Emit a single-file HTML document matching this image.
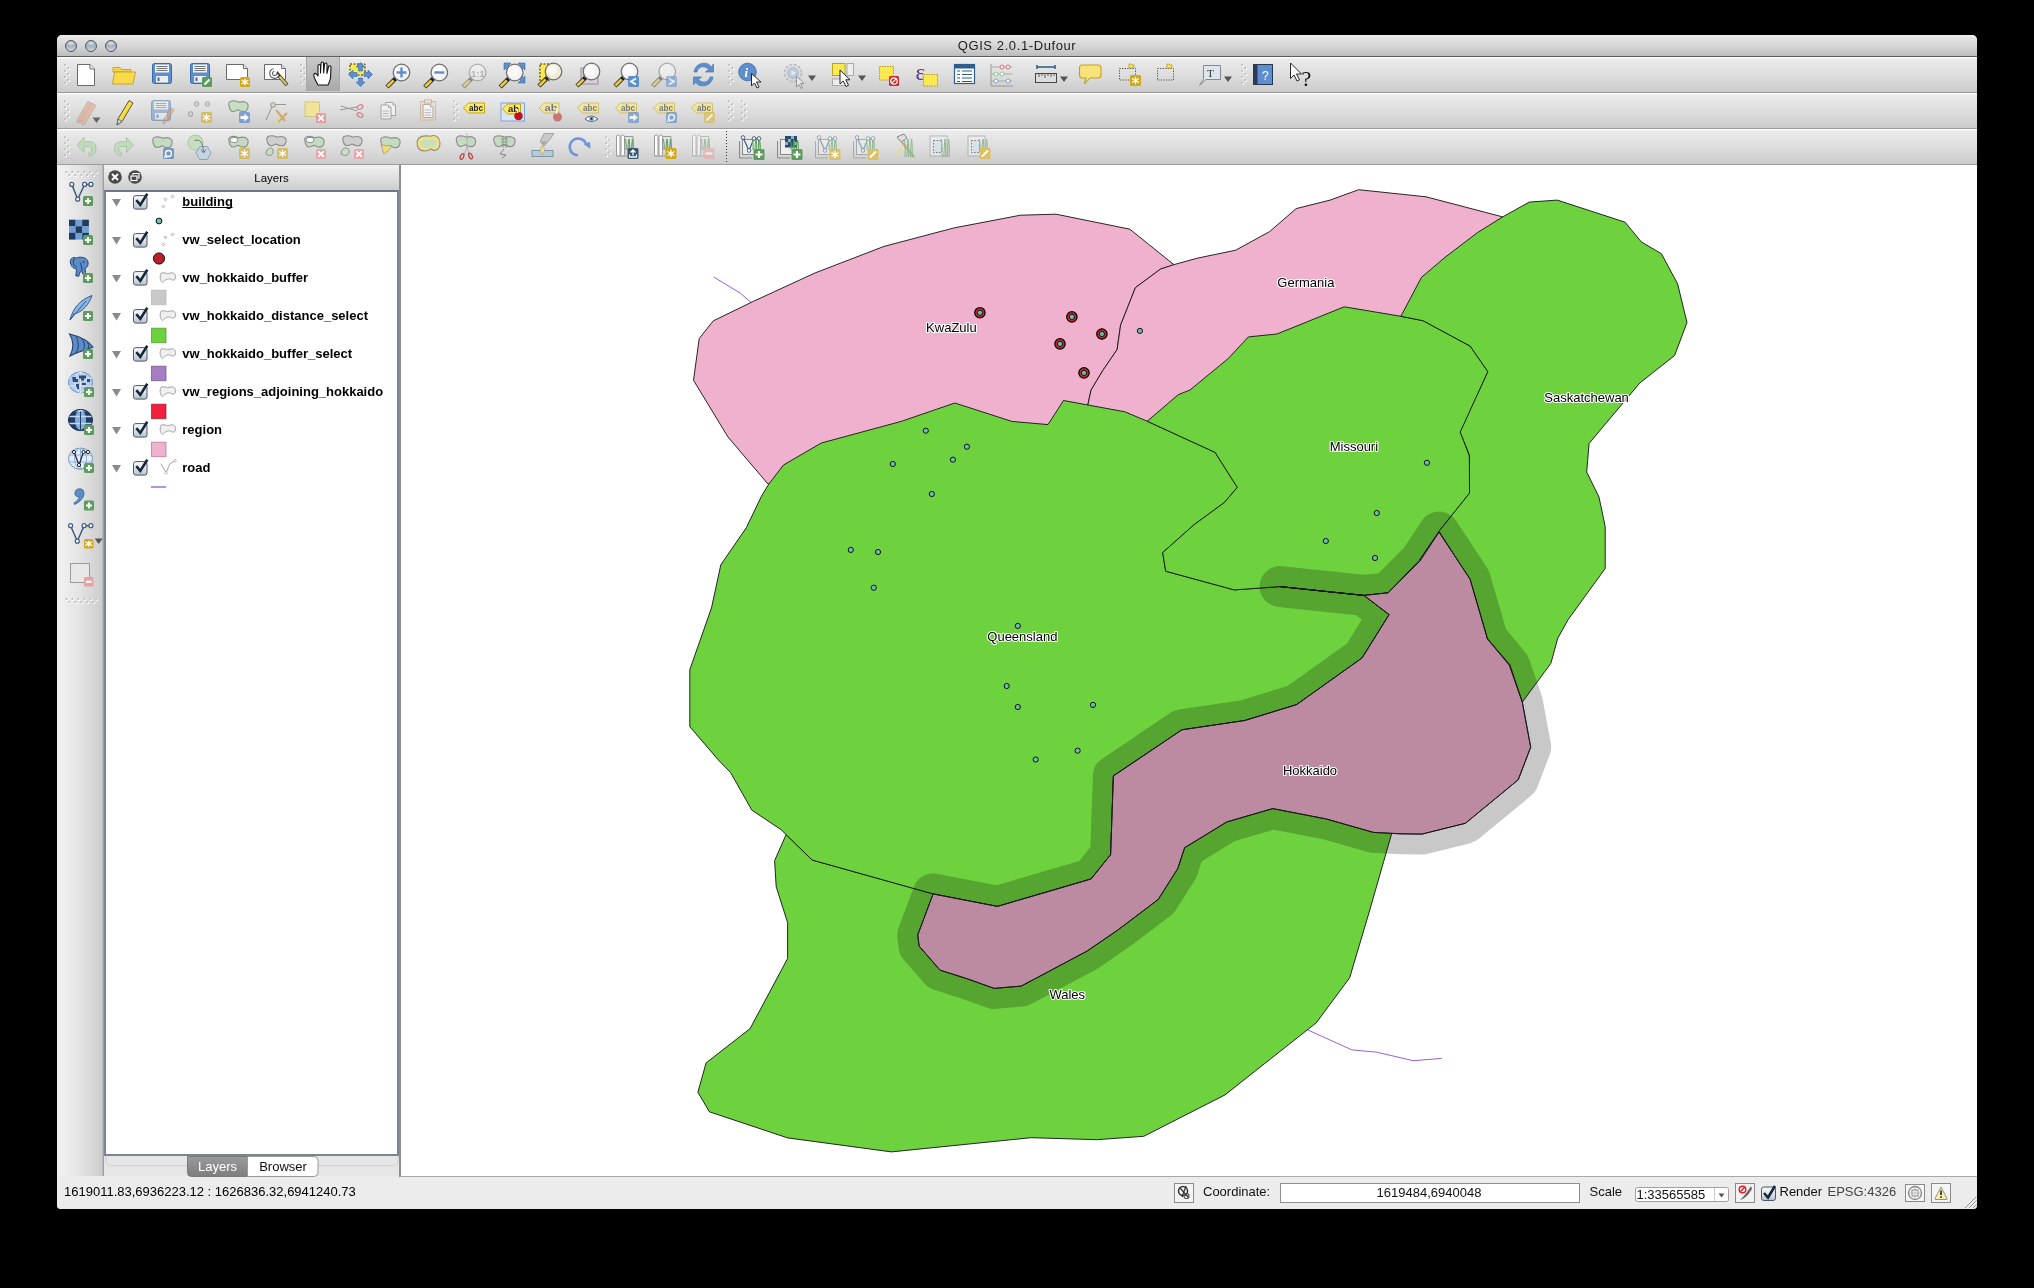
<!DOCTYPE html>
<html><head><meta charset="utf-8">
<style>
*{box-sizing:border-box;margin:0;padding:0}
html,body{width:2034px;height:1288px;background:#000;overflow:hidden;font-family:"Liberation Sans",sans-serif;color:#000}
.abs{position:absolute}
#win{position:absolute;left:57px;top:35px;width:1920px;height:1174px;background:#ececec;border-radius:5px 5px 4px 4px;overflow:hidden}
#title{position:absolute;left:0;top:0;width:1920px;height:22px;background:linear-gradient(#f2f2f2 0px,#e6e6e6 2px,#cfcfcf 14px,#bcbcbc 21px);border-bottom:1px solid #5e5e5e}
#title .t{position:absolute;left:0;width:1920px;top:3px;text-align:center;font-size:13px;letter-spacing:0.6px;color:#1d1d1d}
.light{position:absolute;top:5px;width:12px;height:12px;border-radius:50%;background:radial-gradient(ellipse 55% 30% at 50% 20%,rgba(255,255,255,.75) 0%,rgba(255,255,255,0) 100%),linear-gradient(#8796a3 0%,#a3b1bd 45%,#cbd5dd 100%);border:1px solid #505b66}
.tb{position:absolute;left:0;width:1920px;background:linear-gradient(#fbfbfb 0px,#fbfbfb 1px,#ebebeb 2px,#dcdcdc 20px,#cbcbcb 35px);border-bottom:1px solid #9c9c9c}
.grip{position:absolute;width:6px;height:24px;background-image:radial-gradient(circle,#b8b8b8 0.9px,transparent 1.2px);background-size:4px 4px}
.ico{position:absolute;width:24px;height:24px}
#lefttb{position:absolute;left:0;top:130px;width:47px;height:1011px;background:linear-gradient(90deg,#f2f2f2 0px,#e4e4e4 22px,#d0d0d0 42px,#cdcdcd 44.5px,#a9aeb4 46px,#8d949b 47px)}
#panel{position:absolute;left:47px;top:130px;width:295px;height:1011px;background:#e6e6e6}
#phead{position:absolute;left:0;top:0;width:295px;height:25px;background:linear-gradient(#f2f2f2,#cdcdcd)}
#plist{position:absolute;left:0;top:25px;width:295px;height:966px;background:#fff;border:2px solid #7a8590;border-top:2px solid #6d7882}
.row{position:absolute;left:0;height:20px;font-size:13px;font-weight:bold;white-space:nowrap}
#canvas{position:absolute;left:342px;top:130px;width:1578px;height:1012px;background:#fff;border-left:2px solid #8e8e8e;border-bottom:1px solid #a9a9a9;overflow:hidden}
#status{position:absolute;left:0;top:1142px;width:1920px;height:32px;background:#ececec;font-size:13px}
</style></head>
<body>
<div id="win">
  <div id="title">
    <div class="light" style="left:8px"></div>
    <div class="light" style="left:28px"></div>
    <div class="light" style="left:48px"></div>
    <div class="t">QGIS 2.0.1-Dufour</div>
  </div>
  <div class="tb" style="top:22px;height:36px"></div>
  <div class="tb" style="top:58px;height:36px"></div>
  <div class="tb" style="top:94px;height:36px"></div>
  <div id="lefttb"></div>
  <div id="panel">
    <div id="phead"></div>
    <div id="plist"></div>
  </div>
  <div id="canvas">
  </div>
  <div id="status">
    <div class="abs" style="left:7px;top:7px">1619011.83,6936223.12 : 1626836.32,6941240.73</div>
  </div>
</div>
<svg class="abs" style="left:400px;top:165px" width="1577" height="1011" viewBox="400 165 1577 1011">
<path d="M713.9,277.1 L740.2,293.1 L760.0,310.0" fill="none" stroke="#9b5de5" stroke-width="1"/>
<path d="M1300.0,1025.0 L1307.7,1029.9 L1351.9,1049.9 L1376.2,1052.1 L1413.2,1060.7 L1441.7,1058.4" fill="none" stroke="#9b5de5" stroke-width="1"/>
<path d="M693.5,380.3 L699.2,338.6 L713.2,320.9 L753.7,301.2 L815.2,272.9 L884.0,246.4 L954.1,227.9 L1020.5,215.2 L1056.1,214.2 L1129.9,229.2 L1174.1,264.8 L1160.5,269.1 L1135.4,287.7 L1120.6,325.1 L1117.1,349.6 L1102.8,370.5 L1091.0,390.2 L1088.0,404.2 L1070.0,430.0 L960.0,430.0 L790.0,480.0 L768.0,484.0 L727.9,436.9 Z" fill="#f0b1cf" stroke="#1a1a1a" stroke-width="0.95" stroke-linejoin="round"/>
<path d="M1173.7,264.7 L1197.3,258.2 L1235.7,250.2 L1269.6,231.6 L1296.2,208.6 L1330.1,200.1 L1358.7,189.7 L1426.0,196.8 L1502.7,216.9 L1480.0,300.0 L1400.9,316.3 L1300.0,400.0 L1147.0,430.0 L1088.0,410.0 L1088.0,404.2 L1091.0,390.2 L1102.8,370.5 L1117.1,349.6 L1120.6,325.1 L1135.4,287.7 L1160.5,269.1 Z" fill="#f0b1cf" stroke="#1a1a1a" stroke-width="0.95" stroke-linejoin="round"/>
<path d="M786.1,834.6 L774.6,860.7 L776.2,886.8 L787.6,922.6 L787.6,958.5 L750.1,1028.6 L706.1,1062.9 L697.9,1092.2 L709.4,1111.8 L787.6,1137.9 L891.4,1151.9 L1031.1,1137.7 L1096.7,1139.7 L1143.8,1136.3 L1225.0,1094.9 L1316.3,1022.8 L1349.7,977.7 L1369.2,912.0 L1391.6,833.8 L1390.0,790.0 L1270.0,785.0 L1165.0,835.0 L1080.0,925.0 L990.0,965.0 L935.0,930.0 L933.1,893.9 L812.1,860.0 Z" fill="#6dd23e" stroke="#1a1a1a" stroke-width="0.95" stroke-linejoin="round"/>
<path d="M783.5,465.0 L821.3,443.0 L901.2,421.4 L954.8,403.0 L1011.9,421.4 L1048.0,424.6 L1063.5,400.5 L1124.9,411.8 L1147.6,421.4 L1215.1,452.4 L1237.3,487.4 L1224.4,502.5 L1194.2,524.6 L1162.7,552.6 L1165.7,571.2 L1234.2,589.9 L1280.1,586.6 L1363.9,595.4 L1389.1,614.6 L1362.0,658.0 L1296.6,704.6 L1244.8,720.5 L1181.9,729.8 L1113.4,775.9 L1110.6,854.7 L1091.0,879.0 L997.4,906.4 L933.1,893.9 L812.1,860.0 L781.1,829.7 L751.8,810.1 L730.6,772.6 L718.4,760.0 L689.8,726.7 L689.8,669.7 L711.5,607.9 L720.8,564.8 L746.4,527.6 L761.5,496.1 L768.5,484.5 Z" fill="#6dd23e" stroke="#1a1a1a" stroke-width="0.95" stroke-linejoin="round"/>
<path d="M1147.2,421.3 L1178.2,394.7 L1190.0,390.0 L1228.3,358.5 L1248.4,336.9 L1277.0,334.0 L1344.2,306.8 L1400.9,316.3 L1423.0,320.7 L1470.2,346.1 L1487.9,371.7 L1460.5,432.2 L1469.3,455.8 L1469.5,493.2 L1439.0,531.3 L1418.8,560.8 L1388.1,592.8 L1363.9,595.4 L1280.1,586.6 L1234.2,589.9 L1165.7,571.2 L1162.7,552.6 L1194.2,524.6 L1224.4,502.5 L1237.3,487.4 L1215.1,452.4 L1147.6,421.4 Z" fill="#6dd23e" stroke="#1a1a1a" stroke-width="0.95" stroke-linejoin="round"/>
<path d="M1400.9,316.3 L1421.5,277.3 L1445.1,257.3 L1477.6,232.5 L1502.7,216.9 L1529.2,202.1 L1557.2,200.1 L1625.1,222.2 L1641.3,241.9 L1661.4,253.7 L1677.6,283.8 L1687.0,322.5 L1674.6,355.5 L1639.8,383.0 L1589.1,443.4 L1586.7,472.0 L1599.0,497.1 L1605.2,526.6 L1605.2,568.5 L1568.0,619.8 L1557.7,638.4 L1550.9,663.3 L1522.3,702.1 L1509.9,664.8 L1487.2,638.4 L1470.1,580.0 L1439.0,531.3 L1469.5,493.2 L1469.5,455.2 L1460.2,432.1 L1487.9,371.7 L1470.2,346.1 L1423.0,320.7 Z" fill="#6dd23e" stroke="#1a1a1a" stroke-width="0.95" stroke-linejoin="round"/>
<path d="M1280.1,586.6 L1363.9,595.4 L1388.1,592.8 L1419.8,561.1 L1439.0,532.0 L1470.1,579.2 L1487.5,639.0 L1509.5,665.3 L1522.3,702.1 L1530.7,747.2 L1518.2,779.8 L1465.4,823.3 L1421.9,834.1 L1400.0,833.8 L1373.4,832.4 L1325.9,818.9 L1272.8,808.6 L1226.7,822.0 L1184.7,847.7 L1177.7,868.7 L1158.2,899.5 L1117.6,930.2 L1086.9,951.2 L1021.2,986.1 L994.1,988.4 L966.7,978.6 L940.1,970.2 L919.1,946.1 L917.7,935.0 L933.1,893.9 L997.4,906.4 L1091.0,879.0 L1110.6,854.7 L1113.4,775.9 L1181.9,729.8 L1244.8,720.5 L1296.6,704.6 L1362.0,658.0 L1389.1,614.6 L1363.9,595.4 Z" fill="#f0b1cf" stroke="#1a1a1a" stroke-width="0.95" stroke-linejoin="round"/>
<g style="mix-blend-mode:multiply"><path d="M1280.1,586.6 L1363.9,595.4 L1388.1,592.8 L1419.8,561.1 L1439.0,532.0 L1470.1,579.2 L1487.5,639.0 L1509.5,665.3 L1522.3,702.1 L1530.7,747.2 L1518.2,779.8 L1465.4,823.3 L1421.9,834.1 L1400.0,833.8 L1373.4,832.4 L1325.9,818.9 L1272.8,808.6 L1226.7,822.0 L1184.7,847.7 L1177.7,868.7 L1158.2,899.5 L1117.6,930.2 L1086.9,951.2 L1021.2,986.1 L994.1,988.4 L966.7,978.6 L940.1,970.2 L919.1,946.1 L917.7,935.0 L933.1,893.9 L997.4,906.4 L1091.0,879.0 L1110.6,854.7 L1113.4,775.9 L1181.9,729.8 L1244.8,720.5 L1296.6,704.6 L1362.0,658.0 L1389.1,614.6 L1363.9,595.4 Z" fill="#c8c8c8" stroke="#c8c8c8" stroke-width="41" stroke-linejoin="round" stroke-linecap="round"/></g>
<path d="M1280.1,586.6 L1363.9,595.4 L1388.1,592.8 L1419.8,561.1 L1439.0,532.0 L1470.1,579.2 L1487.5,639.0 L1509.5,665.3 L1522.3,702.1 L1530.7,747.2 L1518.2,779.8 L1465.4,823.3 L1421.9,834.1 L1400.0,833.8 L1373.4,832.4 L1325.9,818.9 L1272.8,808.6 L1226.7,822.0 L1184.7,847.7 L1177.7,868.7 L1158.2,899.5 L1117.6,930.2 L1086.9,951.2 L1021.2,986.1 L994.1,988.4 L966.7,978.6 L940.1,970.2 L919.1,946.1 L917.7,935.0 L933.1,893.9 L997.4,906.4 L1091.0,879.0 L1110.6,854.7 L1113.4,775.9 L1181.9,729.8 L1244.8,720.5 L1296.6,704.6 L1362.0,658.0 L1389.1,614.6 L1363.9,595.4 Z" fill="none" stroke="#1a1a1a" stroke-width="0.95" stroke-linejoin="round"/>
<circle cx="979.9" cy="312.7" r="5.2" fill="#c2262c" stroke="#000" stroke-width="1.2"/>
<circle cx="1071.9" cy="316.9" r="5.2" fill="#c2262c" stroke="#000" stroke-width="1.2"/>
<circle cx="1101.9" cy="334" r="5.2" fill="#c2262c" stroke="#000" stroke-width="1.2"/>
<circle cx="1060" cy="343.9" r="5.2" fill="#c2262c" stroke="#000" stroke-width="1.2"/>
<circle cx="1084" cy="372.9" r="5.2" fill="#c2262c" stroke="#000" stroke-width="1.2"/>
<circle cx="979.9" cy="312.7" r="2.6" fill="#6bbcb5" stroke="#111" stroke-width="1"/>
<circle cx="1071.9" cy="316.9" r="2.6" fill="#6bbcb5" stroke="#111" stroke-width="1"/>
<circle cx="1101.9" cy="334" r="2.6" fill="#6bbcb5" stroke="#111" stroke-width="1"/>
<circle cx="1060" cy="343.9" r="2.6" fill="#6bbcb5" stroke="#111" stroke-width="1"/>
<circle cx="1084" cy="372.9" r="2.6" fill="#6bbcb5" stroke="#111" stroke-width="1"/>
<circle cx="1139.9" cy="330.9" r="2.6" fill="#6bbcb5" stroke="#111" stroke-width="1"/>
<circle cx="925.8" cy="430.7" r="2.6" fill="#6bbcb5" stroke="#111" stroke-width="1"/>
<circle cx="966.9" cy="446.7" r="2.6" fill="#6bbcb5" stroke="#111" stroke-width="1"/>
<circle cx="952.9" cy="459.7" r="2.6" fill="#6bbcb5" stroke="#111" stroke-width="1"/>
<circle cx="892.8" cy="464" r="2.6" fill="#6bbcb5" stroke="#111" stroke-width="1"/>
<circle cx="931.8" cy="494" r="2.6" fill="#6bbcb5" stroke="#111" stroke-width="1"/>
<circle cx="850.8" cy="549.9" r="2.6" fill="#6bbcb5" stroke="#111" stroke-width="1"/>
<circle cx="878" cy="552" r="2.6" fill="#6bbcb5" stroke="#111" stroke-width="1"/>
<circle cx="873.8" cy="587.7" r="2.6" fill="#6bbcb5" stroke="#111" stroke-width="1"/>
<circle cx="1017.8" cy="625.9" r="2.6" fill="#6bbcb5" stroke="#111" stroke-width="1"/>
<circle cx="1006.7" cy="686" r="2.6" fill="#6bbcb5" stroke="#111" stroke-width="1"/>
<circle cx="1017.8" cy="707" r="2.6" fill="#6bbcb5" stroke="#111" stroke-width="1"/>
<circle cx="1093" cy="704.9" r="2.6" fill="#6bbcb5" stroke="#111" stroke-width="1"/>
<circle cx="1077.6" cy="750.7" r="2.6" fill="#6bbcb5" stroke="#111" stroke-width="1"/>
<circle cx="1035.7" cy="759.5" r="2.6" fill="#6bbcb5" stroke="#111" stroke-width="1"/>
<circle cx="1426.9" cy="462.8" r="2.6" fill="#6bbcb5" stroke="#111" stroke-width="1"/>
<circle cx="1376.8" cy="513" r="2.6" fill="#6bbcb5" stroke="#111" stroke-width="1"/>
<circle cx="1325.8" cy="541" r="2.6" fill="#6bbcb5" stroke="#111" stroke-width="1"/>
<circle cx="1375" cy="558" r="2.6" fill="#6bbcb5" stroke="#111" stroke-width="1"/>
<text x="926.0999999999999" y="331.6" font-family="Liberation Sans" font-size="13" fill="#000" stroke="#fff" stroke-width="2.2" stroke-linejoin="round" paint-order="stroke">KwaZulu</text>
<text x="1277.3" y="286.8" font-family="Liberation Sans" font-size="13" fill="#000" stroke="#fff" stroke-width="2.2" stroke-linejoin="round" paint-order="stroke">Germania</text>
<text x="1544.3" y="401.8" font-family="Liberation Sans" font-size="13" fill="#000" stroke="#fff" stroke-width="2.2" stroke-linejoin="round" paint-order="stroke">Saskatchewan</text>
<text x="1329.7" y="450.6" font-family="Liberation Sans" font-size="13" fill="#000" stroke="#fff" stroke-width="2.2" stroke-linejoin="round" paint-order="stroke">Missouri</text>
<text x="987.3" y="641.1" font-family="Liberation Sans" font-size="13" fill="#000" stroke="#fff" stroke-width="2.2" stroke-linejoin="round" paint-order="stroke">Queensland</text>
<text x="1282.8999999999999" y="775.0" font-family="Liberation Sans" font-size="13" fill="#000" stroke="#fff" stroke-width="2.2" stroke-linejoin="round" paint-order="stroke">Hokkaido</text>
<text x="1049.3999999999999" y="999.1" font-family="Liberation Sans" font-size="13" fill="#000" stroke="#fff" stroke-width="2.2" stroke-linejoin="round" paint-order="stroke">Wales</text>
</svg>
<svg class="abs" style="left:0;top:0" width="2034" height="1288">
<rect x="64.6" y="64.5" width="2.2" height="2.2" fill="#fff"/><rect x="64.1" y="64.0" width="1.8" height="1.8" fill="#b9b9b9"/><rect x="67.8" y="67.5" width="2.2" height="2.2" fill="#fff"/><rect x="67.3" y="67.0" width="1.8" height="1.8" fill="#b9b9b9"/><rect x="64.6" y="70.5" width="2.2" height="2.2" fill="#fff"/><rect x="64.1" y="70.0" width="1.8" height="1.8" fill="#b9b9b9"/><rect x="67.8" y="73.5" width="2.2" height="2.2" fill="#fff"/><rect x="67.3" y="73.0" width="1.8" height="1.8" fill="#b9b9b9"/><rect x="64.6" y="76.5" width="2.2" height="2.2" fill="#fff"/><rect x="64.1" y="76.0" width="1.8" height="1.8" fill="#b9b9b9"/><rect x="67.8" y="79.5" width="2.2" height="2.2" fill="#fff"/><rect x="67.3" y="79.0" width="1.8" height="1.8" fill="#b9b9b9"/><rect x="64.6" y="82.5" width="2.2" height="2.2" fill="#fff"/><rect x="64.1" y="82.0" width="1.8" height="1.8" fill="#b9b9b9"/>
<rect x="300.8" y="64.5" width="2.2" height="2.2" fill="#fff"/><rect x="300.3" y="64.0" width="1.8" height="1.8" fill="#b9b9b9"/><rect x="304.0" y="67.5" width="2.2" height="2.2" fill="#fff"/><rect x="303.5" y="67.0" width="1.8" height="1.8" fill="#b9b9b9"/><rect x="300.8" y="70.5" width="2.2" height="2.2" fill="#fff"/><rect x="300.3" y="70.0" width="1.8" height="1.8" fill="#b9b9b9"/><rect x="304.0" y="73.5" width="2.2" height="2.2" fill="#fff"/><rect x="303.5" y="73.0" width="1.8" height="1.8" fill="#b9b9b9"/><rect x="300.8" y="76.5" width="2.2" height="2.2" fill="#fff"/><rect x="300.3" y="76.0" width="1.8" height="1.8" fill="#b9b9b9"/><rect x="304.0" y="79.5" width="2.2" height="2.2" fill="#fff"/><rect x="303.5" y="79.0" width="1.8" height="1.8" fill="#b9b9b9"/><rect x="300.8" y="82.5" width="2.2" height="2.2" fill="#fff"/><rect x="300.3" y="82.0" width="1.8" height="1.8" fill="#b9b9b9"/>
<rect x="728.8" y="64.5" width="2.2" height="2.2" fill="#fff"/><rect x="728.3" y="64.0" width="1.8" height="1.8" fill="#b9b9b9"/><rect x="732.0" y="67.5" width="2.2" height="2.2" fill="#fff"/><rect x="731.5" y="67.0" width="1.8" height="1.8" fill="#b9b9b9"/><rect x="728.8" y="70.5" width="2.2" height="2.2" fill="#fff"/><rect x="728.3" y="70.0" width="1.8" height="1.8" fill="#b9b9b9"/><rect x="732.0" y="73.5" width="2.2" height="2.2" fill="#fff"/><rect x="731.5" y="73.0" width="1.8" height="1.8" fill="#b9b9b9"/><rect x="728.8" y="76.5" width="2.2" height="2.2" fill="#fff"/><rect x="728.3" y="76.0" width="1.8" height="1.8" fill="#b9b9b9"/><rect x="732.0" y="79.5" width="2.2" height="2.2" fill="#fff"/><rect x="731.5" y="79.0" width="1.8" height="1.8" fill="#b9b9b9"/><rect x="728.8" y="82.5" width="2.2" height="2.2" fill="#fff"/><rect x="728.3" y="82.0" width="1.8" height="1.8" fill="#b9b9b9"/>
<rect x="1241.8" y="64.5" width="2.2" height="2.2" fill="#fff"/><rect x="1241.3" y="64.0" width="1.8" height="1.8" fill="#b9b9b9"/><rect x="1245.0" y="67.5" width="2.2" height="2.2" fill="#fff"/><rect x="1244.5" y="67.0" width="1.8" height="1.8" fill="#b9b9b9"/><rect x="1241.8" y="70.5" width="2.2" height="2.2" fill="#fff"/><rect x="1241.3" y="70.0" width="1.8" height="1.8" fill="#b9b9b9"/><rect x="1245.0" y="73.5" width="2.2" height="2.2" fill="#fff"/><rect x="1244.5" y="73.0" width="1.8" height="1.8" fill="#b9b9b9"/><rect x="1241.8" y="76.5" width="2.2" height="2.2" fill="#fff"/><rect x="1241.3" y="76.0" width="1.8" height="1.8" fill="#b9b9b9"/><rect x="1245.0" y="79.5" width="2.2" height="2.2" fill="#fff"/><rect x="1244.5" y="79.0" width="1.8" height="1.8" fill="#b9b9b9"/><rect x="1241.8" y="82.5" width="2.2" height="2.2" fill="#fff"/><rect x="1241.3" y="82.0" width="1.8" height="1.8" fill="#b9b9b9"/>
<path d="M77.5,64.5 L90,64.5 L94.5,69 L94.5,85.5 L77.5,85.5 Z" fill="#fff" stroke="#6a6a6a" stroke-width="1"/><path d="M90,64.5 L90,69 L94.5,69" fill="#eee" stroke="#6a6a6a" stroke-width="1"/>
<path d="M113,67.5 H120 L121.5,69.5 H131 V72 H113 Z" fill="#f6d44a" stroke="#c9a52a"/><path d="M114.5,72 H135.5 L133,84 H112.5 Z" fill="#fbd94c" stroke="#c9a52a"/>
<g opacity="1"><rect x="152.5" y="63.5" width="19" height="20" rx="2" fill="#5d8fcf" stroke="#3b6aa6"/><rect x="155" y="64.5" width="14" height="8" fill="#f2f2f2"/><path d="M156.5,66.5 H167.5 M156.5,68.5 H167.5 M156.5,70.5 H167.5" stroke="#555" stroke-width=".8"/><rect x="156" y="76" width="12" height="6.5" fill="#eee"/><rect x="157.5" y="77.5" width="2" height="3.5" fill="#3b6aa6"/></g>
<g opacity="1"><rect x="190.5" y="63.5" width="19" height="20" rx="2" fill="#5d8fcf" stroke="#3b6aa6"/><rect x="193" y="64.5" width="14" height="8" fill="#f2f2f2"/><path d="M194.5,66.5 H205.5 M194.5,68.5 H205.5 M194.5,70.5 H205.5" stroke="#555" stroke-width=".8"/><rect x="194" y="76" width="12" height="6.5" fill="#eee"/><rect x="195.5" y="77.5" width="2" height="3.5" fill="#3b6aa6"/></g>
<rect x="202" y="77" width="10" height="10" rx="1.5" fill="#5b9b5c"/><path d="M204.5,84.5 L209.5,79.5" stroke="#fff" stroke-width="2"/>
<path d="M226.5,64.5 L243.5,64.5 L247.5,68.5 L247.5,79.5 L226.5,79.5 Z" fill="#fff" stroke="#6a6a6a" stroke-width="1"/><path d="M243.5,64.5 L243.5,68.5 L247.5,68.5" fill="#eee" stroke="#6a6a6a" stroke-width="1"/>
<rect x="240" y="77" width="10" height="10" rx="1.5" fill="#d3a814"/><path d="M245.0,78.8 V85.2 M241.5,80.0 L248.5,84.0 M241.5,84.0 L248.5,80.0" stroke="#fff" stroke-width="1.3"/><circle cx="245.0" cy="82.0" r="1.5" fill="#fff"/>
<path d="M264.5,64.5 L281.5,64.5 L285.5,68.5 L285.5,79.5 L264.5,79.5 Z" fill="#fff" stroke="#6a6a6a" stroke-width="1"/><path d="M281.5,64.5 L281.5,68.5 L285.5,68.5" fill="#eee" stroke="#6a6a6a" stroke-width="1"/>
<path d="M274,70 a3.5,3.5 0 1 0 4,4.5 L287,85" fill="none" stroke="#333" stroke-width="3.6"/><path d="M274,70 a3.5,3.5 0 1 0 4,4.5" fill="none" stroke="#fff" stroke-width="1.8"/><path d="M279.5,76.5 L286.5,84.5" stroke="#e2c65a" stroke-width="2.2"/>
<rect x="306.5" y="57" width="33" height="34" fill="url(#pressed)"/><path d="M306.5,57 V91 M339.5,57 V91" stroke="#a8a8a8" stroke-width="1"/>
<path d="M318,85 C316,81 313,77 314,74 C315,72.5 317,74 318,76 L318,66 C318,64 320.5,64 320.5,66 L320.5,73 L321,63.5 C321,61.5 323.5,61.5 323.5,63.5 L323.7,73 L324.5,64.5 C324.5,62.5 327,62.5 327,64.5 L327,73.5 L328.5,67 C328.8,65 331,65.5 331,67.5 L330.5,78 C330,81 329,83 328,85 Z" fill="#fff" stroke="#111" stroke-width="1.1" stroke-linejoin="round"/>
<rect x="350" y="64" width="15" height="11" fill="#fce94f" stroke="#222" stroke-width="1" stroke-dasharray="2,1.5"/>
<path d="M360.5,62.5 L365,67 H362.5 V71 H358.5 V67 H356 Z M360.5,86.5 L365,82 H362.5 V78 H358.5 V82 H356 Z M348.5,74.5 L353,70 V72.5 H357 V76.5 H353 V79 Z M372.5,74.5 L368,70 V72.5 H364 V76.5 H368 V79 Z" fill="#5d8fcf" stroke="#3b6aa6" stroke-width=".6"/>
<g opacity="1.0"><path d="M395.524,78.476 L386.975,87.025" stroke="#222" stroke-width="4.4" stroke-linecap="butt"/><path d="M393.615,80.385 L387.39,86.61" stroke="#f0c93a" stroke-width="2.8"/><circle cx="401.5" cy="72.5" r="8.3" fill="#f3f3f3" stroke="#6d6d6d" stroke-width="1.2"/><circle cx="400.0" cy="71.0" r="5.300000000000001" fill="#fff" opacity=".6"/><path d="M396.5,72.5 H406.5 M401.5,67.5 V77.5" stroke="#5d8fcf" stroke-width="2.4"/></g>
<g opacity="1.0"><path d="M433.324,78.476 L424.77500000000003,87.025" stroke="#222" stroke-width="4.4" stroke-linecap="butt"/><path d="M431.415,80.385 L425.19,86.61" stroke="#f0c93a" stroke-width="2.8"/><circle cx="439.3" cy="72.5" r="8.3" fill="#f3f3f3" stroke="#6d6d6d" stroke-width="1.2"/><circle cx="437.8" cy="71.0" r="5.300000000000001" fill="#fff" opacity=".6"/><path d="M434.3,72.5 H444.3" stroke="#5d8fcf" stroke-width="2.4"/></g>
<g opacity="0.45"><path d="M471.624,78.476 L463.07500000000005,87.025" stroke="#222" stroke-width="4.4" stroke-linecap="butt"/><path d="M469.71500000000003,80.385 L463.49,86.61" stroke="#f0c93a" stroke-width="2.8"/><circle cx="477.6" cy="72.5" r="8.3" fill="#f3f3f3" stroke="#6d6d6d" stroke-width="1.2"/><circle cx="476.1" cy="71.0" r="5.300000000000001" fill="#fff" opacity=".6"/><text x="471" y="76.5" font-family="Liberation Sans" font-weight="bold" font-size="9.5" fill="#777">1:1</text></g>
<path d="M504,63 H511 L508.5,65.5 L512,69 L509,72 L505.5,68.5 L504,70 Z M525,63 H518 L520.5,65.5 L517,69 L520,72 L523.5,68.5 L525,70 Z M525,83 H518 L520.5,80.5 L517,77 L520,74 L523.5,77.5 L525,76 Z" fill="#5d8fcf" stroke="#3b6aa6" stroke-width=".6"/>
<g opacity="1.0"><path d="M508.72400000000005,78.476 L500.17500000000007,87.025" stroke="#222" stroke-width="4.4" stroke-linecap="butt"/><path d="M506.81500000000005,80.385 L500.59000000000003,86.61" stroke="#f0c93a" stroke-width="2.8"/><circle cx="514.7" cy="72.5" r="8.3" fill="#f3f3f3" stroke="#6d6d6d" stroke-width="1.2"/><circle cx="513.2" cy="71.0" r="5.300000000000001" fill="#fff" opacity=".6"/></g>
<rect x="540" y="64" width="9" height="17" fill="#fce94f" stroke="#222" stroke-dasharray="2,1.5"/>
<g opacity="1.0"><path d="M547.524,77.476 L538.975,86.025" stroke="#222" stroke-width="4.4" stroke-linecap="butt"/><path d="M545.615,79.385 L539.39,85.61" stroke="#f0c93a" stroke-width="2.8"/><circle cx="553.5" cy="71.5" r="8.3" fill="#eeebd8" stroke="#6d6d6d" stroke-width="1.2"/><circle cx="552.0" cy="70.0" r="5.300000000000001" fill="#fff" opacity=".6"/></g>
<rect x="581" y="68" width="17" height="16" fill="#d9cdd8" stroke="#9d8d9c"/>
<g opacity="1.0"><path d="M585.524,77.476 L576.975,86.025" stroke="#222" stroke-width="4.4" stroke-linecap="butt"/><path d="M583.615,79.385 L577.39,85.61" stroke="#f0c93a" stroke-width="2.8"/><circle cx="591.5" cy="71.5" r="8.3" fill="#f3f3f3" stroke="#6d6d6d" stroke-width="1.2"/><circle cx="590.0" cy="70.0" r="5.300000000000001" fill="#fff" opacity=".6"/></g>
<g opacity="1.0"><path d="M623.524,77.476 L614.975,86.025" stroke="#222" stroke-width="4.4" stroke-linecap="butt"/><path d="M621.615,79.385 L615.39,85.61" stroke="#f0c93a" stroke-width="2.8"/><circle cx="629.5" cy="71.5" r="8.3" fill="#f3f3f3" stroke="#6d6d6d" stroke-width="1.2"/><circle cx="628.0" cy="70.0" r="5.300000000000001" fill="#fff" opacity=".6"/></g>
<rect x="628" y="76" width="11" height="11" rx="1.5" fill="#5d8fcf"/>
<path d="M636,78.5 L631,81.5 L636,84.5" fill="none" stroke="#fff" stroke-width="1.8"/>
<g opacity="0.5"><path d="M661.324,77.476 L652.775,86.025" stroke="#222" stroke-width="4.4" stroke-linecap="butt"/><path d="M659.415,79.385 L653.1899999999999,85.61" stroke="#f0c93a" stroke-width="2.8"/><circle cx="667.3" cy="71.5" r="8.3" fill="#f3f3f3" stroke="#6d6d6d" stroke-width="1.2"/><circle cx="665.8" cy="70.0" r="5.300000000000001" fill="#fff" opacity=".6"/></g>
<g opacity=".55"><rect x="666" y="76" width="11" height="11" rx="1.5" fill="#5d8fcf"/><path d="M669,78.5 L674,81.5 L669,84.5" fill="none" stroke="#fff" stroke-width="1.8"/></g>
<path d="M694,72 C695,63 707,60 711.5,67 L713.5,64 V72 H705.5 L708.5,69.5 C705,65 698,66.5 697,72 Z M713,77 C712,86 700,89 695.5,82 L693.5,85 V77 H701.5 L698.5,79.5 C702,84 709,82.5 710,77 Z" fill="#5d8fcf" stroke="#3b6aa6" stroke-width=".6"/>
<circle cx="747.5" cy="72" r="8.8" fill="#5d8fcf" stroke="#4a79b5"/><text x="744.5" y="77" font-family="Liberation Serif" font-style="italic" font-weight="bold" font-size="13" fill="#fff">i</text>
<path d="M751.5,73.5 V86 L754.5,83 L757,88 L759,87 L756.5,82 H761 Z" fill="#fff" stroke="#111" stroke-width=".9" stroke-linejoin="round"/>
<g opacity=".45"><circle cx="793" cy="73" r="8.5" fill="#ddd" stroke="#888" stroke-dasharray="3,1.5" stroke-width="1.5"/><circle cx="793" cy="73" r="5.5" fill="#8fb0d8" stroke="#6a8fbf"/><path d="M791.5,70.5 L796,73 L791.5,75.5 Z" fill="#fff"/><path d="M796.5,76 V87 L799,84.5 L801,88.5 L802.5,87.5 L800.5,83.5 H804 Z" fill="#fff" stroke="#333" stroke-width=".9"/></g>
<path d="M808,75.5 L816,75.5 L812,81 Z" fill="#555"/>
<rect x="832.5" y="63.5" width="12.5" height="12" fill="#fce94f" stroke="#bba31b"/><rect x="847" y="63.5" width="6.5" height="12" fill="#eee" stroke="#aaa"/><rect x="832.5" y="79" width="13" height="6.5" fill="#eee" stroke="#aaa"/>
<path d="M840,70 V84 L843.2,81 L846,86.5 L848.5,85.3 L845.8,79.8 H850 Z" fill="#fff" stroke="#111" stroke-width=".9" stroke-linejoin="round"/>
<path d="M858,75.5 L866,75.5 L862,81 Z" fill="#555"/>
<rect x="879.5" y="66.5" width="14" height="13.5" fill="#fce94f" stroke="#b89c1a" stroke-dasharray="1.5,1"/><rect x="889" y="76" width="10" height="10" rx="1.5" fill="#d9232a"/><circle cx="894" cy="81" r="3.2" fill="none" stroke="#fff" stroke-width="1.2"/><path d="M891.8,83.2 L896.2,78.8" stroke="#fff" stroke-width="1.2"/>
<text x="915.5" y="79.5" font-family="Liberation Serif" font-size="23" fill="#5c3a7e">&#949;</text><rect x="923.5" y="74.5" width="14" height="11.5" fill="#fce94f" stroke="#b89c1a" stroke-dasharray="1.5,1"/>
<rect x="954.5" y="64.5" width="20" height="19" fill="#fff" stroke="#2e5c8e" stroke-width="1.2"/><rect x="955" y="65" width="19" height="3.5" fill="#2e5c8e"/><path d="M957,71 H960 M962,71 H972 M957,74.5 H960 M962,74.5 H972 M957,78 H960 M962,78 H972 M957,81.5 H960 M962,81.5 H972" stroke="#2e5c8e" stroke-width="1.2"/>
<path d="M991,64 V86 H1013" fill="none" stroke="#999" stroke-width="1"/><path d="M991,67 H1012 M991,74 H1012 M991,81 H1012" stroke="#aaa" stroke-width="1"/><circle cx="1002" cy="67" r="2" fill="#fff" stroke="#d66"/><circle cx="1008" cy="67" r="2" fill="#fff" stroke="#d66"/><circle cx="996" cy="74" r="2" fill="#fff" stroke="#8c8"/><circle cx="1002" cy="74" r="2" fill="#fff" stroke="#8c8"/><circle cx="996" cy="81" r="2" fill="#fff" stroke="#7ac"/><circle cx="1008" cy="81" r="2" fill="#fff" stroke="#7ac"/>
<path d="M1037,67 H1055 M1037,65 V69 M1055,65 V69" stroke="#2e5c7e" stroke-width="1.5"/><rect x="1035.5" y="73.5" width="21" height="9" fill="#ddd" stroke="#444" stroke-width="1"/><path d="M1039,74 V77 M1042,74 V76 M1045,74 V78 M1048,74 V76 M1051,74 V77 M1054,74 V76" stroke="#444" stroke-width=".8"/>
<path d="M1060,76.5 L1068,76.5 L1064,82 Z" fill="#555"/>
<path d="M1082,65 H1098 Q1101,65 1101,68 V75 Q1101,78 1098,78 H1090 L1084.5,84 L1086,78 H1082 Q1079.5,78 1079.5,75 V68 Q1079.5,65 1082,65 Z" fill="#f8e27a" stroke="#c4a020" stroke-width="1.1"/>
<rect x="1119.5" y="68.5" width="16" height="11.5" fill="none" stroke="#555" stroke-dasharray="1.3,1.3"/><path d="M1129,67 V64 H1131 L1132,65 H1134 V68 H1129 Z" fill="#fce94f" stroke="#b89c1a" stroke-width=".8"/><rect x="1130" y="75" width="11" height="11" rx="1.5" fill="#d3a814"/><path d="M1135.5,76.8 V84.2 M1132.0,78.5 L1139.0,82.5 M1132.0,82.5 L1139.0,78.5" stroke="#fff" stroke-width="1.3"/><circle cx="1135.5" cy="80.5" r="1.5" fill="#fff"/>
<rect x="1157.5" y="68.5" width="16" height="11.5" fill="none" stroke="#555" stroke-dasharray="1.3,1.3"/><path d="M1167,67 V64 H1169 L1170,65 H1172 V68 H1167 Z" fill="#fce94f" stroke="#b89c1a" stroke-width=".8"/>
<path d="M1203.5,65.5 H1220.5 V79.5 H1206 L1199.5,85.5 L1203.5,79 Z" fill="#dde6ee" stroke="#888" stroke-width="1"/><text x="1207" y="77" font-family="Liberation Serif" font-size="11" fill="#333">T</text>
<path d="M1224,76.5 L1232,76.5 L1228,82 Z" fill="#555"/>
<rect x="1253.5" y="64.5" width="19" height="20" fill="#5d8fcf" stroke="#253850"/><rect x="1253.5" y="64.5" width="4" height="20" fill="#2a3d55"/><text x="1262" y="80" font-family="Liberation Sans" font-size="12" fill="#fff">?</text>
<path d="M1290.5,63 V78.5 L1294,75 L1297,81 L1299.5,79.8 L1296.5,74 H1301.5 Z" fill="#fff" stroke="#111" stroke-width=".9" stroke-linejoin="round"/><text x="1301.5" y="85.5" font-family="Liberation Serif" font-size="22" fill="#111">?</text>
<rect x="64.6" y="101.0" width="2.2" height="2.2" fill="#fff"/><rect x="64.1" y="100.5" width="1.8" height="1.8" fill="#b9b9b9"/><rect x="67.8" y="104.0" width="2.2" height="2.2" fill="#fff"/><rect x="67.3" y="103.5" width="1.8" height="1.8" fill="#b9b9b9"/><rect x="64.6" y="107.0" width="2.2" height="2.2" fill="#fff"/><rect x="64.1" y="106.5" width="1.8" height="1.8" fill="#b9b9b9"/><rect x="67.8" y="110.0" width="2.2" height="2.2" fill="#fff"/><rect x="67.3" y="109.5" width="1.8" height="1.8" fill="#b9b9b9"/><rect x="64.6" y="113.0" width="2.2" height="2.2" fill="#fff"/><rect x="64.1" y="112.5" width="1.8" height="1.8" fill="#b9b9b9"/><rect x="67.8" y="116.0" width="2.2" height="2.2" fill="#fff"/><rect x="67.3" y="115.5" width="1.8" height="1.8" fill="#b9b9b9"/><rect x="64.6" y="119.0" width="2.2" height="2.2" fill="#fff"/><rect x="64.1" y="118.5" width="1.8" height="1.8" fill="#b9b9b9"/>
<rect x="453.8" y="101.0" width="2.2" height="2.2" fill="#fff"/><rect x="453.3" y="100.5" width="1.8" height="1.8" fill="#b9b9b9"/><rect x="457.0" y="104.0" width="2.2" height="2.2" fill="#fff"/><rect x="456.5" y="103.5" width="1.8" height="1.8" fill="#b9b9b9"/><rect x="453.8" y="107.0" width="2.2" height="2.2" fill="#fff"/><rect x="453.3" y="106.5" width="1.8" height="1.8" fill="#b9b9b9"/><rect x="457.0" y="110.0" width="2.2" height="2.2" fill="#fff"/><rect x="456.5" y="109.5" width="1.8" height="1.8" fill="#b9b9b9"/><rect x="453.8" y="113.0" width="2.2" height="2.2" fill="#fff"/><rect x="453.3" y="112.5" width="1.8" height="1.8" fill="#b9b9b9"/><rect x="457.0" y="116.0" width="2.2" height="2.2" fill="#fff"/><rect x="456.5" y="115.5" width="1.8" height="1.8" fill="#b9b9b9"/><rect x="453.8" y="119.0" width="2.2" height="2.2" fill="#fff"/><rect x="453.3" y="118.5" width="1.8" height="1.8" fill="#b9b9b9"/>
<rect x="728.4" y="101.0" width="2.2" height="2.2" fill="#fff"/><rect x="727.9" y="100.5" width="1.8" height="1.8" fill="#b9b9b9"/><rect x="731.6" y="104.0" width="2.2" height="2.2" fill="#fff"/><rect x="731.1" y="103.5" width="1.8" height="1.8" fill="#b9b9b9"/><rect x="728.4" y="107.0" width="2.2" height="2.2" fill="#fff"/><rect x="727.9" y="106.5" width="1.8" height="1.8" fill="#b9b9b9"/><rect x="731.6" y="110.0" width="2.2" height="2.2" fill="#fff"/><rect x="731.1" y="109.5" width="1.8" height="1.8" fill="#b9b9b9"/><rect x="728.4" y="113.0" width="2.2" height="2.2" fill="#fff"/><rect x="727.9" y="112.5" width="1.8" height="1.8" fill="#b9b9b9"/><rect x="731.6" y="116.0" width="2.2" height="2.2" fill="#fff"/><rect x="731.1" y="115.5" width="1.8" height="1.8" fill="#b9b9b9"/><rect x="728.4" y="119.0" width="2.2" height="2.2" fill="#fff"/><rect x="727.9" y="118.5" width="1.8" height="1.8" fill="#b9b9b9"/>
<rect x="741.4" y="101.0" width="2.2" height="2.2" fill="#fff"/><rect x="740.9" y="100.5" width="1.8" height="1.8" fill="#b9b9b9"/><rect x="744.6" y="104.0" width="2.2" height="2.2" fill="#fff"/><rect x="744.1" y="103.5" width="1.8" height="1.8" fill="#b9b9b9"/><rect x="741.4" y="107.0" width="2.2" height="2.2" fill="#fff"/><rect x="740.9" y="106.5" width="1.8" height="1.8" fill="#b9b9b9"/><rect x="744.6" y="110.0" width="2.2" height="2.2" fill="#fff"/><rect x="744.1" y="109.5" width="1.8" height="1.8" fill="#b9b9b9"/><rect x="741.4" y="113.0" width="2.2" height="2.2" fill="#fff"/><rect x="740.9" y="112.5" width="1.8" height="1.8" fill="#b9b9b9"/><rect x="744.6" y="116.0" width="2.2" height="2.2" fill="#fff"/><rect x="744.1" y="115.5" width="1.8" height="1.8" fill="#b9b9b9"/><rect x="741.4" y="119.0" width="2.2" height="2.2" fill="#fff"/><rect x="740.9" y="118.5" width="1.8" height="1.8" fill="#b9b9b9"/>
<g opacity=".55"><path d="M77,120 L88,101 L92,103.5 L81,122 L77.5,123 Z" fill="#e29873" stroke="#999" stroke-width=".8"/><path d="M81,122 L92,103 L96,105.5 L85,124 L81.5,125 Z" fill="#e9a07a" stroke="#999" stroke-width=".8"/></g>
<path d="M92.5,117.5 L100.5,117.5 L96.5,123 Z" fill="#666"/>
<path d="M117,125 L118,119 L129,100.5 L133,103 L122,121.5 Z" fill="#f4df3e" stroke="#555" stroke-width="1"/><path d="M117,125 L118,119 L122,121.5 Z" fill="#ddd" stroke="#555" stroke-width=".8"/>
<g opacity="0.5"><rect x="151.5" y="100.5" width="19" height="20" rx="2" fill="#5d8fcf" stroke="#3b6aa6"/><rect x="154" y="101.5" width="14" height="8" fill="#f2f2f2"/><path d="M155.5,103.5 H166.5 M155.5,105.5 H166.5 M155.5,107.5 H166.5" stroke="#555" stroke-width=".8"/><rect x="155" y="113" width="12" height="6.5" fill="#eee"/><rect x="156.5" y="114.5" width="2" height="3.5" fill="#3b6aa6"/></g>
<g opacity=".6"><path d="M163,124 L164,119 L171,108 L174,110 L167,121 Z" fill="#ee9966" stroke="#888" stroke-width=".8"/></g>
<g opacity=".5"><circle cx="196.5" cy="104" r="2.3" fill="#b7d8b0" stroke="#666"/><circle cx="207.5" cy="104" r="2.3" fill="#b7d8b0" stroke="#666"/><circle cx="190.5" cy="114" r="2.3" fill="#b7d8b0" stroke="#666"/></g><rect x="201" y="112" width="11" height="11" rx="1.5" fill="#d8bc62"/><path d="M206.5,113.8 V121.2 M203.0,115.5 L210.0,119.5 M203.0,119.5 L210.0,115.5" stroke="#fff" stroke-width="1.3"/><circle cx="206.5" cy="117.5" r="1.5" fill="#fff"/>
<path d="M229,105.85 C227,100 234.7,100 239.1,102.34 C243.5,100.65 249,101.95 248,107.15 C247,113 242.4,112.35 238.0,109.75 C232.5,113 230,111.7 229,105.85 Z" fill="#c6dfc0" stroke="#8e8e8e" stroke-width="1.1"/><rect x="239" y="112" width="11" height="11" rx="1.5" fill="#7da0cf"/><path d="M240.5,116.0 H244.5 V113.5 L248.8,117.5 L244.5,121.5 V119.0 H240.5 Z" fill="#fff"/>
<g opacity=".6"><path d="M266,120 L273,104.5 H286" fill="none" stroke="#555" stroke-width=".9"/><circle cx="273" cy="105" r="2.4" fill="#b7d8b0" stroke="#666"/><path d="M278,122 L287,113" stroke="#cc8833" stroke-width="2.2"/><path d="M276,110 L285,121" stroke="#cc8833" stroke-width="2.2"/><path d="M275,123 L280,118" stroke="#eee066" stroke-width="2"/></g>
<rect x="305" y="102" width="14.5" height="14.5" fill="#f0e39a" stroke="#c9b24a" stroke-dasharray="1.3,1"/><rect x="316" y="113" width="10" height="10" rx="1.5" fill="#e39b9b"/><path d="M318.2,115.2 L323.8,120.8 M318.2,120.8 L323.8,115.2" stroke="#fff" stroke-width="1.8"/>
<g opacity=".7"><path d="M340,110 L357,107 M341,106 L357,111" stroke="#777" stroke-width="1"/><ellipse cx="360" cy="107" rx="3" ry="2" fill="none" stroke="#d06060" stroke-width="1.3" transform="rotate(-30 360 107)"/><ellipse cx="360" cy="115" rx="3" ry="2" fill="none" stroke="#d06060" stroke-width="1.3" transform="rotate(30 360 115)"/></g>
<g opacity=".55"><path d="M385.5,102.5 L393,102.5 L395.5,105 L395.5,115.5 L385.5,115.5 Z" fill="#fff" stroke="#777" stroke-width="1"/><path d="M393,102.5 L393,105 L395.5,105" fill="#eee" stroke="#777" stroke-width="1"/><path d="M381.0,105.0 L388.5,105.0 L391.0,107.5 L391.0,119.0 L381.0,119.0 Z" fill="#fff" stroke="#777" stroke-width="1"/><path d="M388.5,105.0 L388.5,107.5 L391.0,107.5" fill="#eee" stroke="#777" stroke-width="1"/><path d="M382.5,111 H389 M382.5,113.5 H389 M382.5,116 H389" stroke="#777" stroke-width=".7"/></g>
<g opacity=".6"><rect x="420.5" y="101.5" width="15" height="18.5" fill="#f1dcc0" stroke="#d0a070"/><rect x="424.5" y="100" width="7" height="3" fill="#eee" stroke="#c09060"/><path d="M423.0,104.5 L430.5,104.5 L433.0,107 L433.0,117.5 L423.0,117.5 Z" fill="#fff" stroke="#888" stroke-width="1"/><path d="M430.5,104.5 L430.5,107 L433.0,107" fill="#eee" stroke="#888" stroke-width="1"/><path d="M424.5,110 H431 M424.5,112.5 H431 M424.5,115 H431" stroke="#888" stroke-width=".7"/></g>
<g opacity="1.0"><path d="M463.5,108 L468.5,103 H484.5 V113 H468.5 Z" fill="#fde96a" stroke="#c4a50e" stroke-width="1"/><text x="469.0" y="111.3" font-family="Liberation Sans" font-weight="bold" font-size="9" fill="#222" textLength="14" lengthAdjust="spacingAndGlyphs">abc</text></g>
<rect x="501" y="103" width="23.5" height="18" fill="#dbe5f0" stroke="#79a5de" stroke-width="1"/><g opacity="1.0"><path d="M502.5,109 L507.5,104 H520.5 V114 H507.5 Z" fill="#fde96a" stroke="#c4a50e" stroke-width="1"/><text x="508.0" y="112.3" font-family="Liberation Sans" font-weight="bold" font-size="9" fill="#222" textLength="11" lengthAdjust="spacingAndGlyphs">ab</text></g><circle cx="518.5" cy="116" r="4.3" fill="#c0141a"/><path d="M517.5,109 V113" stroke="#fff" stroke-width="1.5"/>
<g opacity="0.55"><path d="M539,108 L544,103 H559 V113 H544 Z" fill="#fde96a" stroke="#c4a50e" stroke-width="1"/><text x="544.5" y="111.3" font-family="Liberation Sans" font-weight="bold" font-size="9" fill="#222" textLength="13" lengthAdjust="spacingAndGlyphs">ab</text></g><circle cx="557.5" cy="117" r="4.5" fill="#c56565" opacity=".85"/><path d="M556.5,108 V114" stroke="#fff" stroke-width="1.6"/>
<g opacity="0.55"><path d="M577.5,108 L582.5,103 H598.5 V113 H582.5 Z" fill="#fde96a" stroke="#c4a50e" stroke-width="1"/><text x="583.0" y="111.3" font-family="Liberation Sans" font-weight="bold" font-size="9" fill="#222" textLength="14" lengthAdjust="spacingAndGlyphs">abc</text></g><path d="M585,119 Q591,113 598,119 Q591,124 585,119 Z" fill="#fff" stroke="#555" stroke-width=".9"/><circle cx="591.5" cy="118.8" r="2.3" fill="#6a9fdc"/><circle cx="591.5" cy="118.8" r="1" fill="#222"/>
<g opacity="0.55"><path d="M615.5,108 L620.5,103 H636.5 V113 H620.5 Z" fill="#fde96a" stroke="#c4a50e" stroke-width="1"/><text x="621.0" y="111.3" font-family="Liberation Sans" font-weight="bold" font-size="9" fill="#222" textLength="14" lengthAdjust="spacingAndGlyphs">abc</text></g><g opacity=".65"><rect x="628" y="112" width="11" height="11" rx="1.5" fill="#5d8fcf"/><path d="M629.5,116.0 H633.5 V113.5 L637.8,117.5 L633.5,121.5 V119.0 H629.5 Z" fill="#fff"/></g>
<g opacity="0.55"><path d="M653.5,108 L658.5,103 H674.5 V113 H658.5 Z" fill="#fde96a" stroke="#c4a50e" stroke-width="1"/><text x="659.0" y="111.3" font-family="Liberation Sans" font-weight="bold" font-size="9" fill="#222" textLength="14" lengthAdjust="spacingAndGlyphs">abc</text></g><g opacity=".65"><rect x="666" y="112" width="11" height="11" rx="1.5" fill="#5d8fcf"/><circle cx="671.5" cy="117.5" r="3" fill="none" stroke="#fff" stroke-width="1.3"/><path d="M668.5,118.5 l-1,3 l3,-0.5" fill="none" stroke="#fff" stroke-width="1"/></g>
<g opacity="0.55"><path d="M691.5,108 L696.5,103 H712.5 V113 H696.5 Z" fill="#fde96a" stroke="#c4a50e" stroke-width="1"/><text x="697.0" y="111.3" font-family="Liberation Sans" font-weight="bold" font-size="9" fill="#222" textLength="14" lengthAdjust="spacingAndGlyphs">abc</text></g><g opacity=".6"><rect x="704" y="112" width="11" height="11" rx="1.5" fill="#d9bb45"/><path d="M706.5,120.5 L712.5,114.5" stroke="#fff" stroke-width="2"/></g>
<rect x="64.6" y="137.0" width="2.2" height="2.2" fill="#fff"/><rect x="64.1" y="136.5" width="1.8" height="1.8" fill="#b9b9b9"/><rect x="67.8" y="140.0" width="2.2" height="2.2" fill="#fff"/><rect x="67.3" y="139.5" width="1.8" height="1.8" fill="#b9b9b9"/><rect x="64.6" y="143.0" width="2.2" height="2.2" fill="#fff"/><rect x="64.1" y="142.5" width="1.8" height="1.8" fill="#b9b9b9"/><rect x="67.8" y="146.0" width="2.2" height="2.2" fill="#fff"/><rect x="67.3" y="145.5" width="1.8" height="1.8" fill="#b9b9b9"/><rect x="64.6" y="149.0" width="2.2" height="2.2" fill="#fff"/><rect x="64.1" y="148.5" width="1.8" height="1.8" fill="#b9b9b9"/><rect x="67.8" y="152.0" width="2.2" height="2.2" fill="#fff"/><rect x="67.3" y="151.5" width="1.8" height="1.8" fill="#b9b9b9"/><rect x="64.6" y="155.0" width="2.2" height="2.2" fill="#fff"/><rect x="64.1" y="154.5" width="1.8" height="1.8" fill="#b9b9b9"/>
<rect x="605.8" y="137.0" width="2.2" height="2.2" fill="#fff"/><rect x="605.3" y="136.5" width="1.8" height="1.8" fill="#b9b9b9"/><rect x="609.0" y="140.0" width="2.2" height="2.2" fill="#fff"/><rect x="608.5" y="139.5" width="1.8" height="1.8" fill="#b9b9b9"/><rect x="605.8" y="143.0" width="2.2" height="2.2" fill="#fff"/><rect x="605.3" y="142.5" width="1.8" height="1.8" fill="#b9b9b9"/><rect x="609.0" y="146.0" width="2.2" height="2.2" fill="#fff"/><rect x="608.5" y="145.5" width="1.8" height="1.8" fill="#b9b9b9"/><rect x="605.8" y="149.0" width="2.2" height="2.2" fill="#fff"/><rect x="605.3" y="148.5" width="1.8" height="1.8" fill="#b9b9b9"/><rect x="609.0" y="152.0" width="2.2" height="2.2" fill="#fff"/><rect x="608.5" y="151.5" width="1.8" height="1.8" fill="#b9b9b9"/><rect x="605.8" y="155.0" width="2.2" height="2.2" fill="#fff"/><rect x="605.3" y="154.5" width="1.8" height="1.8" fill="#b9b9b9"/>
<path d="M726.5,131 V163" stroke="#333" stroke-width="1" stroke-dasharray="1,2"/>
<path d="M77,145 L84,137.5 V141.5 H88 C94,141.5 96,144 96,149 C96,153.5 93,155 89.5,156 L88.5,153 C91,152 92,151 92,149 C92,147 90,146.5 88,146.5 H84 V152.5 Z" fill="#bfdcba" stroke="#a2c29d" stroke-width=".8"/>
<path d="M133.5,145 L126.5,137.5 V141.5 H122.5 C116.5,141.5 114.5,144 114.5,149 C114.5,153.5 117.5,155 121,156 L122,153 C119.5,152 118.5,151 118.5,149 C118.5,147 120.5,146.5 122.5,146.5 H126.5 V152.5 Z" fill="#bfdcba" stroke="#a2c29d" stroke-width=".8"/>
<path d="M153,141.85 C151,136 158.7,136 163.1,138.34 C167.5,136.65 173,137.95 172,143.15 C171,149 166.4,148.35 162.0,145.75 C156.5,149 154,147.7 153,141.85 Z" fill="#c3dcc0" stroke="#8c8c8c" stroke-width="1.1"/><rect x="163" y="148" width="11" height="11" rx="1.5" fill="#7697c4"/><circle cx="168.5" cy="153.5" r="3" fill="none" stroke="#fff" stroke-width="1.3"/><path d="M165.5,154.5 l-1,3 l3,-0.5" fill="none" stroke="#fff" stroke-width="1"/>
<circle cx="195.5" cy="142.5" r="7.5" fill="#c6dfc0" stroke="#a6c6a0"/><path d="M211,153 L207.3,159.5 H199.7 L196,153 L199.7,146.5 H207.3 Z" fill="#c4d5e3" stroke="#8ea3b6" stroke-width="1"/><path d="M194.5,140.5 Q203,137.5 203.5,152" fill="none" stroke="#777" stroke-width="1"/><path d="M201,149.5 L203.5,153 L206,149.5" fill="none" stroke="#777" stroke-width="1"/>
<path d="M229,141.35 C227,135.5 234.7,135.5 239.1,137.84 C243.5,136.15 249,137.45 248,142.65 C247,148.5 242.4,147.85 238.0,145.25 C232.5,148.5 230,147.2 229,141.35 Z" fill="#c3dcc0" stroke="#8c8c8c" stroke-width="1.1"/><ellipse cx="234" cy="140" rx="4" ry="2.6" fill="#fff" stroke="#8e8e8e"/><rect x="239" y="148" width="11" height="11" rx="1.5" fill="#d8bc62"/><path d="M244.5,149.8 V157.2 M241.0,151.5 L248.0,155.5 M241.0,155.5 L248.0,151.5" stroke="#fff" stroke-width="1.3"/><circle cx="244.5" cy="153.5" r="1.5" fill="#fff"/>
<path d="M267,140.4 C265,135 272.7,135 277.1,137.16 C281.5,135.6 287,136.8 286,141.6 C285,147 280.4,146.4 276.0,144.0 C270.5,147 268,145.8 267,140.4 Z" fill="#cfcfcf" stroke="#8c8c8c" stroke-width="1.1"/><path d="M266,154 C266,148 272,146 273,150 C274,155 270,157 266,154 Z" fill="#c6dfc0" stroke="#8e8e8e"/><rect x="277" y="148" width="11" height="11" rx="1.5" fill="#d8bc62"/><path d="M282.5,149.8 V157.2 M279.0,151.5 L286.0,155.5 M279.0,155.5 L286.0,151.5" stroke="#fff" stroke-width="1.3"/><circle cx="282.5" cy="153.5" r="1.5" fill="#fff"/>
<path d="M305,141.35 C303,135.5 310.7,135.5 315.1,137.84 C319.5,136.15 325,137.45 324,142.65 C323,148.5 318.4,147.85 314.0,145.25 C308.5,148.5 306,147.2 305,141.35 Z" fill="#c3dcc0" stroke="#8c8c8c" stroke-width="1.1"/><ellipse cx="310" cy="140" rx="4" ry="2.6" fill="#fff" stroke="#8e8e8e"/><rect x="316" y="149" width="10" height="10" rx="1.5" fill="#e8a5a5"/><path d="M318.2,151.2 L323.8,156.8 M318.2,156.8 L323.8,151.2" stroke="#fff" stroke-width="1.8"/>
<path d="M343,140.4 C341,135 348.7,135 353.1,137.16 C357.5,135.6 363,136.8 362,141.6 C361,147 356.4,146.4 352.0,144.0 C346.5,147 344,145.8 343,140.4 Z" fill="#cfcfcf" stroke="#8c8c8c" stroke-width="1.1"/><path d="M341,154 C341,148 347,146 349,150 C350,155 346,157 341,154 Z" fill="#c6dfc0" stroke="#8e8e8e"/><rect x="354" y="149" width="10" height="10" rx="1.5" fill="#e8a5a5"/><path d="M356.2,151.2 L361.8,156.8 M356.2,156.8 L361.8,151.2" stroke="#fff" stroke-width="1.8"/>
<path d="M381,141.85 C379,136 386.7,136 391.1,138.34 C395.5,136.65 401,137.95 400,143.15 C399,149 394.4,148.35 390.0,145.75 C384.5,149 382,147.7 381,141.85 Z" fill="#c3dcc0" stroke="#8c8c8c" stroke-width="1.1"/><path d="M381,145 L384,154 L388,151 L392,146 Z" fill="#f0dd70" stroke="#999" stroke-width=".8"/>
<path d="M419,138 C423,134 430,137 431,136 C436,134 440,138 440,143 C440,150 435,152 431,149 C427,152 419,152 417.5,146 C416.5,142 417,140 419,138 Z" fill="#f3df7c" stroke="#8c8c8c" stroke-width="1.1"/><path d="M422,140.5 C425,138.5 429,140 431,140 C434,138.5 437,140.5 437,144 C437,147 434,148 431,146 C428,148 423,148.5 421,145 C420,143 420.5,141.5 422,140.5 Z" fill="#c6dfc0"/>
<path d="M456.5,140.85 C454.5,135 462.2,135 466.6,137.34 C471.0,135.65 476.5,136.95 475.5,142.15 C474.5,148 469.9,147.35 465.5,144.75 C460.0,148 457.5,146.7 456.5,140.85 Z" fill="#c3dcc0" stroke="#8c8c8c" stroke-width="1.1"/><path d="M467,133 V146 L463,158 M467,146 L470,158" fill="none" stroke="#aaa" stroke-width=".8"/><ellipse cx="462" cy="156.5" rx="1.6" ry="3" fill="none" stroke="#c03c3c" stroke-width="1.2" transform="rotate(25 462 156.5)"/><ellipse cx="470.5" cy="156" rx="1.6" ry="3" fill="none" stroke="#c03c3c" stroke-width="1.2" transform="rotate(-25 470.5 156)"/>
<path d="M494,140.85 C492,135 500.4,135 505.2,137.34 C510.0,135.65 516,136.95 515,142.15 C514,148 508.8,147.35 504.0,144.75 C498.0,148 495,146.7 494,140.85 Z" fill="#c3dcc0" stroke="#8c8c8c" stroke-width="1.1"/><path d="M503,136 V148 M506,136 V148 M501,139 H508 M501,142 H508 M501,145 H508" stroke="#888" stroke-width=".8"/><path d="M504,149 L500,154 L506,155 L502,158" fill="none" stroke="#777" stroke-width=".9"/>
<path d="M540,142 L544,133.5 H554 L548,142 Z" fill="#c8c8c8" stroke="#999" stroke-width=".8"/><path d="M540,142 L548,142 L544,146.5 Z" fill="#aaa"/><rect x="532" y="150.5" width="21" height="6" fill="#b6ccd8" stroke="#7e97a8"/><path d="M542.5,145 L545,150 L542.5,155 L540,150 Z" fill="#f3e08a" stroke="#999" stroke-width=".6"/>
<path d="M586,143.5 A8.5,8.5 0 1 0 578,155.5" fill="none" stroke="#6f95dc" stroke-width="2.6"/><path d="M583.5,144 L590,142 L590.5,149 Z" fill="#6f95dc"/>
<g opacity="1"><path d="M616.5,136 V156 H633 V136.5 H621" fill="none" stroke="#999" stroke-width="1"/><rect x="616.5" y="135" width="3.5" height="21" rx="1.7" fill="#fff" stroke="#999"/><rect x="621" y="135" width="3.5" height="21" rx="1.7" fill="#fff" stroke="#999"/><g opacity="1"><path d="M626.0,150 Q626.5,144.5 625.5,139" stroke="#59a05a" stroke-width="1" fill="none"/><path d="M627.8,150 Q628.3,144.5 628.8,139" stroke="#59a05a" stroke-width="1" fill="none"/><path d="M629.6,150 Q630.1,144.5 629.1,139" stroke="#59a05a" stroke-width="1" fill="none"/><path d="M631.4,150 Q631.9,144.5 632.4,139" stroke="#59a05a" stroke-width="1" fill="none"/><path d="M633.2,150 Q633.7,144.5 632.7,139" stroke="#59a05a" stroke-width="1" fill="none"/></g><rect x="627.5" y="148" width="11" height="11" rx="1.5" fill="#35566f"/><path d="M633.0,150 V155.5 M630.5,152.5 L633.0,150 L635.5,152.5 M629.5,154.5 V157 H636.5 V154.5" fill="none" stroke="#fff" stroke-width="1.3"/></g>
<g opacity="1"><path d="M654.5,136 V156 H671 V136.5 H659" fill="none" stroke="#999" stroke-width="1"/><rect x="654.5" y="135" width="3.5" height="21" rx="1.7" fill="#fff" stroke="#999"/><rect x="659" y="135" width="3.5" height="21" rx="1.7" fill="#fff" stroke="#999"/><g opacity="1"><path d="M664.0,150 Q664.5,144.5 663.5,139" stroke="#59a05a" stroke-width="1" fill="none"/><path d="M665.8,150 Q666.3,144.5 666.8,139" stroke="#59a05a" stroke-width="1" fill="none"/><path d="M667.6,150 Q668.1,144.5 667.1,139" stroke="#59a05a" stroke-width="1" fill="none"/><path d="M669.4,150 Q669.9,144.5 670.4,139" stroke="#59a05a" stroke-width="1" fill="none"/><path d="M671.2,150 Q671.7,144.5 670.7,139" stroke="#59a05a" stroke-width="1" fill="none"/></g><rect x="665.5" y="148" width="11" height="11" rx="1.5" fill="#d3a814"/><path d="M671.0,149.8 V157.2 M667.5,151.5 L674.5,155.5 M667.5,155.5 L674.5,151.5" stroke="#fff" stroke-width="1.3"/><circle cx="671.0" cy="153.5" r="1.5" fill="#fff"/></g>
<g opacity="0.55"><path d="M692.5,136 V156 H709 V136.5 H697" fill="none" stroke="#999" stroke-width="1"/><rect x="692.5" y="135" width="3.5" height="21" rx="1.7" fill="#fff" stroke="#999"/><rect x="697" y="135" width="3.5" height="21" rx="1.7" fill="#fff" stroke="#999"/><g opacity="1"><path d="M702.0,150 Q702.5,144.5 701.5,139" stroke="#59a05a" stroke-width="1" fill="none"/><path d="M703.8,150 Q704.3,144.5 704.8,139" stroke="#59a05a" stroke-width="1" fill="none"/><path d="M705.6,150 Q706.1,144.5 705.1,139" stroke="#59a05a" stroke-width="1" fill="none"/><path d="M707.4,150 Q707.9,144.5 708.4,139" stroke="#59a05a" stroke-width="1" fill="none"/><path d="M709.2,150 Q709.7,144.5 708.7,139" stroke="#59a05a" stroke-width="1" fill="none"/></g><rect x="703.5" y="148" width="11" height="11" rx="1.5" fill="#e6a3a3"/><path d="M705.5,153.5 H712.5" stroke="#fff" stroke-width="2.2"/></g>
<path d="M739.5,141 V158 H752" fill="none" stroke="#888"/><rect x="742.5" y="139.5" width="16" height="15" fill="#eee" stroke="#888"/><path d="M743,137.5 L749,150.5 L754,138.5 L759,138.5" fill="none" stroke="#3d5c7e" stroke-width="1.2"/><circle cx="743" cy="137.5" r="1.8" fill="#fff" stroke="#3d5c7e" stroke-width="1"/><circle cx="749" cy="150.5" r="1.8" fill="#fff" stroke="#3d5c7e" stroke-width="1"/><circle cx="754" cy="138.5" r="1.8" fill="#fff" stroke="#3d5c7e" stroke-width="1"/><circle cx="759" cy="138.5" r="1.8" fill="#fff" stroke="#3d5c7e" stroke-width="1"/><g opacity="1"><path d="M753.0,150 Q753.5,145.0 752.5,140" stroke="#5aa25b" stroke-width="1" fill="none"/><path d="M754.8,150 Q755.3,145.0 755.8,140" stroke="#5aa25b" stroke-width="1" fill="none"/><path d="M756.6,150 Q757.1,145.0 756.1,140" stroke="#5aa25b" stroke-width="1" fill="none"/><path d="M758.4,150 Q758.9,145.0 759.4,140" stroke="#5aa25b" stroke-width="1" fill="none"/><path d="M760.2,150 Q760.7,145.0 759.7,140" stroke="#5aa25b" stroke-width="1" fill="none"/></g><rect x="753.5" y="149" width="11" height="11" rx="1.5" fill="#5b9b5c"/><path d="M759.0,151 V158 M755.5,154.5 H762.5" stroke="#fff" stroke-width="2.2"/>
<path d="M777.5,141 V158 H790" fill="none" stroke="#888"/><rect x="780.5" y="139.5" width="16" height="15" fill="#eee" stroke="#888"/><rect x="785" y="136" width="12" height="11.5" fill="#2b4b6e"/><rect x="788" y="139" width="3" height="3" fill="#8fb0d0"/><rect x="791" y="136" width="3" height="3" fill="#8fb0d0"/><rect x="785" y="142" width="3" height="3" fill="#8fb0d0"/><rect x="794" y="142" width="3" height="3" fill="#8fb0d0"/><g opacity="1"><path d="M791.0,150 Q791.5,145.0 790.5,140" stroke="#5aa25b" stroke-width="1" fill="none"/><path d="M792.8,150 Q793.3,145.0 793.8,140" stroke="#5aa25b" stroke-width="1" fill="none"/><path d="M794.6,150 Q795.1,145.0 794.1,140" stroke="#5aa25b" stroke-width="1" fill="none"/><path d="M796.4,150 Q796.9,145.0 797.4,140" stroke="#5aa25b" stroke-width="1" fill="none"/><path d="M798.2,150 Q798.7,145.0 797.7,140" stroke="#5aa25b" stroke-width="1" fill="none"/></g><rect x="791.5" y="149" width="11" height="11" rx="1.5" fill="#5b9b5c"/><path d="M797.0,151 V158 M793.5,154.5 H800.5" stroke="#fff" stroke-width="2.2"/>
<g opacity=".6"><path d="M815.5,141 V158 H828" fill="none" stroke="#888"/><rect x="818.5" y="139.5" width="16" height="15" fill="#eee" stroke="#888"/><path d="M819,137.5 L825,150.5 L830,138.5 L835,138.5" fill="none" stroke="#55738f" stroke-width="1.2"/><circle cx="819" cy="137.5" r="1.8" fill="#fff" stroke="#55738f" stroke-width="1"/><circle cx="825" cy="150.5" r="1.8" fill="#fff" stroke="#55738f" stroke-width="1"/><circle cx="830" cy="138.5" r="1.8" fill="#fff" stroke="#55738f" stroke-width="1"/><circle cx="835" cy="138.5" r="1.8" fill="#fff" stroke="#55738f" stroke-width="1"/><g opacity="1"><path d="M829.0,150 Q829.5,145.0 828.5,140" stroke="#5aa25b" stroke-width="1" fill="none"/><path d="M830.8,150 Q831.3,145.0 831.8,140" stroke="#5aa25b" stroke-width="1" fill="none"/><path d="M832.6,150 Q833.1,145.0 832.1,140" stroke="#5aa25b" stroke-width="1" fill="none"/><path d="M834.4,150 Q834.9,145.0 835.4,140" stroke="#5aa25b" stroke-width="1" fill="none"/><path d="M836.2,150 Q836.7,145.0 835.7,140" stroke="#5aa25b" stroke-width="1" fill="none"/></g></g><rect x="829.5" y="149" width="11" height="11" rx="1.5" fill="#dcc062"/><path d="M835.0,150.8 V158.2 M831.5,152.5 L838.5,156.5 M831.5,156.5 L838.5,152.5" stroke="#fff" stroke-width="1.3"/><circle cx="835.0" cy="154.5" r="1.5" fill="#fff"/>
<g opacity=".6"><path d="M853.5,141 V158 H866" fill="none" stroke="#888"/><rect x="856.5" y="139.5" width="16" height="15" fill="#eee" stroke="#888"/><path d="M857,137.5 L863,150.5 L868,138.5 L873,138.5" fill="none" stroke="#55738f" stroke-width="1.2"/><circle cx="857" cy="137.5" r="1.8" fill="#fff" stroke="#55738f" stroke-width="1"/><circle cx="863" cy="150.5" r="1.8" fill="#fff" stroke="#55738f" stroke-width="1"/><circle cx="868" cy="138.5" r="1.8" fill="#fff" stroke="#55738f" stroke-width="1"/><circle cx="873" cy="138.5" r="1.8" fill="#fff" stroke="#55738f" stroke-width="1"/><g opacity="1"><path d="M867.0,150 Q867.5,145.0 866.5,140" stroke="#5aa25b" stroke-width="1" fill="none"/><path d="M868.8,150 Q869.3,145.0 869.8,140" stroke="#5aa25b" stroke-width="1" fill="none"/><path d="M870.6,150 Q871.1,145.0 870.1,140" stroke="#5aa25b" stroke-width="1" fill="none"/><path d="M872.4,150 Q872.9,145.0 873.4,140" stroke="#5aa25b" stroke-width="1" fill="none"/><path d="M874.2,150 Q874.7,145.0 873.7,140" stroke="#5aa25b" stroke-width="1" fill="none"/></g></g><rect x="867.5" y="149" width="11" height="11" rx="1.5" fill="#dcc062"/><path d="M870.0,157.5 L876.0,151.5" stroke="#fff" stroke-width="2"/>
<g opacity=".6"><path d="M897,137 L904,134 L907,138 L901,142 Z" fill="#ddd" stroke="#444"/><path d="M901,141 L914,157" stroke="#c08a40" stroke-width="2.3"/><path d="M896,155 L902,148" stroke="#e5e06a" stroke-width="2.2"/><g opacity="1"><path d="M905.0,157 Q905.5,148.0 904.5,139" stroke="#5aa25b" stroke-width="1" fill="none"/><path d="M906.8,157 Q907.3,148.0 907.8,139" stroke="#5aa25b" stroke-width="1" fill="none"/><path d="M908.6,157 Q909.1,148.0 908.1,139" stroke="#5aa25b" stroke-width="1" fill="none"/><path d="M910.4,157 Q910.9,148.0 911.4,139" stroke="#5aa25b" stroke-width="1" fill="none"/><path d="M912.2,157 Q912.7,148.0 911.7,139" stroke="#5aa25b" stroke-width="1" fill="none"/></g></g>
<g opacity=".6"><rect x="930" y="136" width="17" height="20" fill="#eee" stroke="#999"/><rect x="933.5" y="140.5" width="8" height="12" fill="#d4e4f2" stroke="#333" stroke-dasharray="1.5,1.5"/><g opacity="1"><path d="M942.0,157 Q942.5,148.0 941.5,139" stroke="#5aa25b" stroke-width="1" fill="none"/><path d="M943.8,157 Q944.3,148.0 944.8,139" stroke="#5aa25b" stroke-width="1" fill="none"/><path d="M945.6,157 Q946.1,148.0 945.1,139" stroke="#5aa25b" stroke-width="1" fill="none"/><path d="M947.4,157 Q947.9,148.0 948.4,139" stroke="#5aa25b" stroke-width="1" fill="none"/><path d="M949.2,157 Q949.7,148.0 948.7,139" stroke="#5aa25b" stroke-width="1" fill="none"/></g></g>
<g opacity=".6"><rect x="968" y="136" width="17" height="20" fill="#eee" stroke="#999"/><rect x="971.5" y="140.5" width="8" height="12" fill="#d4e4f2" stroke="#333" stroke-dasharray="1.5,1.5"/><g opacity="1"><path d="M980.0,150 Q980.5,144.5 979.5,139" stroke="#5aa25b" stroke-width="1" fill="none"/><path d="M981.8,150 Q982.3,144.5 982.8,139" stroke="#5aa25b" stroke-width="1" fill="none"/><path d="M983.6,150 Q984.1,144.5 983.1,139" stroke="#5aa25b" stroke-width="1" fill="none"/><path d="M985.4,150 Q985.9,144.5 986.4,139" stroke="#5aa25b" stroke-width="1" fill="none"/><path d="M987.2,150 Q987.7,144.5 986.7,139" stroke="#5aa25b" stroke-width="1" fill="none"/></g></g><rect x="979.5" y="148" width="11" height="11" rx="1.5" fill="#dcc062"/><path d="M982.0,156.5 L988.0,150.5" stroke="#fff" stroke-width="2"/>
<defs><linearGradient id="pressed" x1="0" y1="0" x2="0" y2="1"><stop offset="0" stop-color="#c9c9c9"/><stop offset="1" stop-color="#a9a9a9"/></linearGradient></defs>
</svg>
<svg class="abs" style="left:0;top:0" width="2034" height="1288">
<rect x="66.0" y="171.5" width="2.2" height="2.2" fill="#fff"/><rect x="65.5" y="171.0" width="1.8" height="1.8" fill="#b9b9b9"/><rect x="69.0" y="174.5" width="2.2" height="2.2" fill="#fff"/><rect x="68.5" y="174.0" width="1.8" height="1.8" fill="#b9b9b9"/><rect x="72.0" y="171.5" width="2.2" height="2.2" fill="#fff"/><rect x="71.5" y="171.0" width="1.8" height="1.8" fill="#b9b9b9"/><rect x="75.0" y="174.5" width="2.2" height="2.2" fill="#fff"/><rect x="74.5" y="174.0" width="1.8" height="1.8" fill="#b9b9b9"/><rect x="78.0" y="171.5" width="2.2" height="2.2" fill="#fff"/><rect x="77.5" y="171.0" width="1.8" height="1.8" fill="#b9b9b9"/><rect x="81.0" y="174.5" width="2.2" height="2.2" fill="#fff"/><rect x="80.5" y="174.0" width="1.8" height="1.8" fill="#b9b9b9"/><rect x="84.0" y="171.5" width="2.2" height="2.2" fill="#fff"/><rect x="83.5" y="171.0" width="1.8" height="1.8" fill="#b9b9b9"/><rect x="87.0" y="174.5" width="2.2" height="2.2" fill="#fff"/><rect x="86.5" y="174.0" width="1.8" height="1.8" fill="#b9b9b9"/><rect x="90.0" y="171.5" width="2.2" height="2.2" fill="#fff"/><rect x="89.5" y="171.0" width="1.8" height="1.8" fill="#b9b9b9"/><rect x="93.0" y="174.5" width="2.2" height="2.2" fill="#fff"/><rect x="92.5" y="174.0" width="1.8" height="1.8" fill="#b9b9b9"/><rect x="96.0" y="171.5" width="2.2" height="2.2" fill="#fff"/><rect x="95.5" y="171.0" width="1.8" height="1.8" fill="#b9b9b9"/>
<rect x="66.0" y="598.5" width="2.2" height="2.2" fill="#fff"/><rect x="65.5" y="598.0" width="1.8" height="1.8" fill="#b9b9b9"/><rect x="69.0" y="601.5" width="2.2" height="2.2" fill="#fff"/><rect x="68.5" y="601.0" width="1.8" height="1.8" fill="#b9b9b9"/><rect x="72.0" y="598.5" width="2.2" height="2.2" fill="#fff"/><rect x="71.5" y="598.0" width="1.8" height="1.8" fill="#b9b9b9"/><rect x="75.0" y="601.5" width="2.2" height="2.2" fill="#fff"/><rect x="74.5" y="601.0" width="1.8" height="1.8" fill="#b9b9b9"/><rect x="78.0" y="598.5" width="2.2" height="2.2" fill="#fff"/><rect x="77.5" y="598.0" width="1.8" height="1.8" fill="#b9b9b9"/><rect x="81.0" y="601.5" width="2.2" height="2.2" fill="#fff"/><rect x="80.5" y="601.0" width="1.8" height="1.8" fill="#b9b9b9"/><rect x="84.0" y="598.5" width="2.2" height="2.2" fill="#fff"/><rect x="83.5" y="598.0" width="1.8" height="1.8" fill="#b9b9b9"/><rect x="87.0" y="601.5" width="2.2" height="2.2" fill="#fff"/><rect x="86.5" y="601.0" width="1.8" height="1.8" fill="#b9b9b9"/><rect x="90.0" y="598.5" width="2.2" height="2.2" fill="#fff"/><rect x="89.5" y="598.0" width="1.8" height="1.8" fill="#b9b9b9"/><rect x="93.0" y="601.5" width="2.2" height="2.2" fill="#fff"/><rect x="92.5" y="601.0" width="1.8" height="1.8" fill="#b9b9b9"/><rect x="96.0" y="598.5" width="2.2" height="2.2" fill="#fff"/><rect x="95.5" y="598.0" width="1.8" height="1.8" fill="#b9b9b9"/>
<path d="M71.8,184.4 L77.7,199.2 L84.6,184.4 L90.9,184.4" fill="none" stroke="#3d5c7e" stroke-width="1.5"/><circle cx="71.8" cy="184.4" r="2" fill="#fff" stroke="#3d5c7e" stroke-width="1.2"/><circle cx="77.7" cy="199.2" r="2" fill="#fff" stroke="#3d5c7e" stroke-width="1.2"/><circle cx="84.6" cy="184.4" r="2" fill="#fff" stroke="#3d5c7e" stroke-width="1.2"/><circle cx="90.9" cy="184.4" r="2" fill="#fff" stroke="#3d5c7e" stroke-width="1.2"/><rect x="83" y="196" width="10" height="10" rx="1.5" fill="#5b9b5c"/><path d="M88.0,198 V204 M85,201.0 H91" stroke="#fff" stroke-width="2.2"/>
<rect x="69.0" y="219.7" width="6.7" height="6.7" fill="#1f3b5e"/><rect x="75.6" y="219.7" width="6.7" height="6.7" fill="#6f9fd4"/><rect x="82.2" y="219.7" width="6.7" height="6.7" fill="#1f3b5e"/><rect x="69.0" y="226.29999999999998" width="6.7" height="6.7" fill="#6f9fd4"/><rect x="75.6" y="226.29999999999998" width="6.7" height="6.7" fill="#1f3b5e"/><rect x="82.2" y="226.29999999999998" width="6.7" height="6.7" fill="#6f9fd4"/><rect x="69.0" y="232.89999999999998" width="6.7" height="6.7" fill="#1f3b5e"/><rect x="75.6" y="232.89999999999998" width="6.7" height="6.7" fill="#6f9fd4"/><rect x="82.2" y="232.89999999999998" width="6.7" height="6.7" fill="#1f3b5e"/><rect x="83" y="235" width="10" height="10" rx="1.5" fill="#5b9b5c"/><path d="M88.0,237 V243 M85,240.0 H91" stroke="#fff" stroke-width="2.2"/>
<path d="M70.5,263 C69.5,258.5 73,256.8 76.5,258 C78.5,256.8 85.5,256.5 87.5,260.5 C89,264 87.5,267.5 85,268.5 L85.5,272.5 C85.8,275 83,275.3 82.3,273 L81.8,270.3 C80.3,271.5 79.3,273.5 78.8,276.2 L75.8,275.8 C76.3,273.3 76.6,270.5 76.2,268.6 C73.5,268.8 71.2,266.5 70.5,263 Z" fill="#5b8cca" stroke="#223f66" stroke-width="1"/><path d="M74.5,258.8 C72.5,261.5 73,265.5 76.5,266.8 M80,262.5 C81,265 82,267 81.8,270.3" fill="none" stroke="#223f66" stroke-width="1"/><circle cx="83.5" cy="262" r="0.9" fill="#223f66"/><rect x="83" y="273" width="10" height="10" rx="1.5" fill="#5b9b5c"/><path d="M88.0,275 V281 M85,278.0 H91" stroke="#fff" stroke-width="2.2"/>
<path d="M70,320 C73,308 80,300 92,295.5 C89,304 83,312 74,314 Z" fill="#8fb5e3" stroke="#2f5b92" stroke-width="1"/><path d="M70,320 L86,301" stroke="#2f5b92" stroke-width="1"/><rect x="83" y="311" width="10" height="10" rx="1.5" fill="#5b9b5c"/><path d="M88.0,313 V319 M85,316.0 H91" stroke="#fff" stroke-width="2.2"/>
<path d="M69.5,334 C78,336 88,340 93,347 C86,350 78,352 70,356 C74,348 74,341 69.5,334 Z" fill="#5d8dc9" stroke="#213f66" stroke-width="1.1"/><path d="M76,336.5 C79,342 79,348 76,353 M82,339 C85,343 85,347 83,350.5 M87.5,342.5 C89,345 89,347 88,349" fill="none" stroke="#213f66" stroke-width="1"/><rect x="83" y="349" width="10" height="10" rx="1.5" fill="#5b9b5c"/><path d="M88.0,351 V357 M85,354.0 H91" stroke="#fff" stroke-width="2.2"/>
<ellipse cx="80.5" cy="382.3" rx="12" ry="10.5" fill="#b3cbea" stroke="#6c93c6"/><path d="M69,378 H92 M69,386 H92 M80.5,372 V393" stroke="#dbe7f5" stroke-width="1"/><ellipse cx="80.5" cy="382.3" rx="5.5" ry="10.3" fill="none" stroke="#dbe7f5"/><path d="M72,377 h4 v2 h2 v3 h-5 z M79,375.5 h7 v3 h-2 v2 h-3 v-2 h-2 z M87,379 h3 v3 h-3 z M76,384 h3 v5 h-2 v-2 h-1 z M82,383 h4 v2 h-4 z M84,388 h2 v2 h-2 z" fill="#2f4f78"/><rect x="84" y="387" width="10" height="10" rx="1.5" fill="#5b9b5c"/><path d="M89.0,389 V395 M86,392.0 H92" stroke="#fff" stroke-width="2.2"/>
<ellipse cx="80.5" cy="420" rx="12" ry="10.6" fill="#1f3f66" stroke="#12294a"/><ellipse cx="80.5" cy="420" rx="5.5" ry="10.2" fill="#86acdc"/><path d="M69.5,416.5 H91.5 M69.5,423.5 H91.5" stroke="#c6d8f0" stroke-width="1.6"/><path d="M80.5,410 V430" stroke="#1f3f66" stroke-width="1"/><path d="M74.5,411.5 L80.5,409.8 L86.5,411.5" fill="#c6d8f0"/><rect x="84" y="425" width="10" height="10" rx="1.5" fill="#5b9b5c"/><path d="M89.0,427 V433 M86,430.0 H92" stroke="#fff" stroke-width="2.2"/>
<ellipse cx="80.5" cy="458.7" rx="12" ry="10.6" fill="#e4edf8" stroke="#6c93c6"/><path d="M69,455 H92 M69,462 H92 M80.5,448 V469" stroke="#8ab0dc" stroke-width="1"/><ellipse cx="80.5" cy="458.7" rx="6" ry="10.4" fill="none" stroke="#8ab0dc"/><path d="M74,452 L79,465 L83.5,452 L88,452" fill="none" stroke="#222" stroke-width="1.2"/><circle cx="74" cy="452" r="1.6" fill="#fff" stroke="#222"/><circle cx="79" cy="465" r="1.6" fill="#fff" stroke="#222"/><circle cx="83.5" cy="452" r="1.6" fill="#fff" stroke="#222"/><circle cx="88" cy="452" r="1.6" fill="#fff" stroke="#222"/><rect x="84" y="463" width="10" height="10" rx="1.5" fill="#5b9b5c"/><path d="M89.0,465 V471 M86,468.0 H92" stroke="#fff" stroke-width="2.2"/>
<path d="M78.5,489 C83,488 85,492 83.5,496 C82,500 78,503 74.5,504.5 L74,503 C77,501 79,499 79.5,497 C76,497 74.5,495 75,492.5 C75.5,490 77,489 78.5,489 Z" fill="#5d8dc9" stroke="#35608f" stroke-width=".8"/><rect x="84" y="500.5" width="10" height="10" rx="1.5" fill="#5b9b5c"/><path d="M89.0,502.5 V508.5 M86,505.5 H92" stroke="#fff" stroke-width="2.2"/>
<path d="M70.6,525.7 L77.3,541.2 L84.1,525.7 L90.9,525.7" fill="none" stroke="#3d5c7e" stroke-width="1.5"/><circle cx="70.6" cy="525.7" r="2" fill="#fff" stroke="#3d5c7e" stroke-width="1.2"/><circle cx="77.3" cy="541.2" r="2" fill="#fff" stroke="#3d5c7e" stroke-width="1.2"/><circle cx="84.1" cy="525.7" r="2" fill="#fff" stroke="#3d5c7e" stroke-width="1.2"/><circle cx="90.9" cy="525.7" r="2" fill="#fff" stroke="#3d5c7e" stroke-width="1.2"/><rect x="84" y="539" width="9.5" height="9.5" rx="1.5" fill="#d3a814"/><path d="M88.75,540.8 V546.7 M85.25,541.75 L92.25,545.75 M85.25,545.75 L92.25,541.75" stroke="#fff" stroke-width="1.3"/><circle cx="88.75" cy="543.75" r="1.5" fill="#fff"/>
<path d="M94.7,538.5 L102.7,538.5 L98.7,544 Z" fill="#555"/>
<rect x="70.5" y="563.5" width="19" height="19" fill="#e8e8e8" stroke="#9a9a9a"/><rect x="84" y="577" width="9.5" height="9.5" rx="1.5" fill="#e9a0a0"/><path d="M86,581.75 H91.5" stroke="#fff" stroke-width="2.2"/>
<circle cx="115" cy="177" r="6.8" fill="#4a4a4a"/><path d="M112,174 L118,180 M112,180 L118,174" stroke="#fff" stroke-width="2"/>
<circle cx="135" cy="177" r="6.8" fill="#4a4a4a"/><rect x="131" y="176" width="6" height="4.5" fill="none" stroke="#fff" stroke-width="1.2"/><path d="M133,175 V173.5 H139 V178 H137.5" fill="none" stroke="#fff" stroke-width="1.2"/>
<text x="271.5" y="181.5" text-anchor="middle" font-family="Liberation Sans" font-size="11.5" fill="#000">Layers</text>
<path d="M112,198.89999999999998 H121 L116.5,206.6 Z" fill="#8a8a8a"/>
<rect x="133.5" y="195.6" width="13.5" height="13.5" rx="2.2" fill="url(#cbg)" stroke="#4d5866" stroke-width="1"/>
<path d="M136.3,200.2 L140.3,204.89999999999998 L147.3,193.7" fill="none" stroke="#17283a" stroke-width="2.6" stroke-linejoin="miter"/>
<path d="M172.5,195.1 l1.4,1.4 l-1.4,1.4 l-1.4,-1.4 Z" fill="#fff" stroke="#777" stroke-width=".6"/><path d="M165.3,197.89999999999998 l1.4,1.4 l-1.4,1.4 l-1.4,-1.4 Z" fill="#fff" stroke="#777" stroke-width=".6"/><path d="M163.4,205.2 l1.4,1.4 l-1.4,1.4 l-1.4,-1.4 Z" fill="#fff" stroke="#777" stroke-width=".6"/>
<text x="182.3" y="206.0" font-family="Liberation Sans" font-weight="bold" font-size="13" fill="#000">building</text>
<path d="M182.3,207.5 H232.5" stroke="#000" stroke-width="1"/>
<circle cx="159" cy="221.0" r="2.9" fill="#6fc1bb" stroke="#111" stroke-width="1"/>
<path d="M112,236.89999999999998 H121 L116.5,244.6 Z" fill="#8a8a8a"/>
<rect x="133.5" y="233.6" width="13.5" height="13.5" rx="2.2" fill="url(#cbg)" stroke="#4d5866" stroke-width="1"/>
<path d="M136.3,238.2 L140.3,242.89999999999998 L147.3,231.7" fill="none" stroke="#17283a" stroke-width="2.6" stroke-linejoin="miter"/>
<path d="M172.5,233.1 l1.4,1.4 l-1.4,1.4 l-1.4,-1.4 Z" fill="#fff" stroke="#777" stroke-width=".6"/><path d="M165.3,235.89999999999998 l1.4,1.4 l-1.4,1.4 l-1.4,-1.4 Z" fill="#fff" stroke="#777" stroke-width=".6"/><path d="M163.4,243.2 l1.4,1.4 l-1.4,1.4 l-1.4,-1.4 Z" fill="#fff" stroke="#777" stroke-width=".6"/>
<text x="182.3" y="244.0" font-family="Liberation Sans" font-weight="bold" font-size="13" fill="#000">vw_select_location</text>
<circle cx="159" cy="258.5" r="5.6" fill="#b82227" stroke="#111" stroke-width="1"/>
<path d="M112,274.9 H121 L116.5,282.59999999999997 Z" fill="#8a8a8a"/>
<rect x="133.5" y="271.59999999999997" width="13.5" height="13.5" rx="2.2" fill="url(#cbg)" stroke="#4d5866" stroke-width="1"/>
<path d="M136.3,276.2 L140.3,280.9 L147.3,269.7" fill="none" stroke="#17283a" stroke-width="2.6" stroke-linejoin="miter"/>
<path d="M161,273.2 C164,271.7 167,274.2 169,273.5 C172,272.09999999999997 175.5,272.7 175.5,276.7 C175.5,280.7 173,280.7 170.5,279.2 C168,278.2 165,279.7 162.5,282.7 C160,280.7 159.5,276.7 161,273.2 Z" fill="#efefef" stroke="#999" stroke-width=".9"/>
<text x="182.3" y="282.0" font-family="Liberation Sans" font-weight="bold" font-size="13" fill="#000">vw_hokkaido_buffer</text>
<rect x="151.5" y="290.2" width="14.5" height="14.5" fill="#c9c9c9" stroke="#aaaaaa" stroke-width="1" stroke-opacity=".6"/>
<path d="M112,312.9 H121 L116.5,320.59999999999997 Z" fill="#8a8a8a"/>
<rect x="133.5" y="309.59999999999997" width="13.5" height="13.5" rx="2.2" fill="url(#cbg)" stroke="#4d5866" stroke-width="1"/>
<path d="M136.3,314.2 L140.3,318.9 L147.3,307.7" fill="none" stroke="#17283a" stroke-width="2.6" stroke-linejoin="miter"/>
<path d="M161,311.2 C164,309.7 167,312.2 169,311.5 C172,310.09999999999997 175.5,310.7 175.5,314.7 C175.5,318.7 173,318.7 170.5,317.2 C168,316.2 165,317.7 162.5,320.7 C160,318.7 159.5,314.7 161,311.2 Z" fill="#efefef" stroke="#999" stroke-width=".9"/>
<text x="182.3" y="320.0" font-family="Liberation Sans" font-weight="bold" font-size="13" fill="#000">vw_hokkaido_distance_select</text>
<rect x="151.5" y="328.2" width="14.5" height="14.5" fill="#6dd23e" stroke="#3b8a1a" stroke-width="1" stroke-opacity=".6"/>
<path d="M112,350.9 H121 L116.5,358.59999999999997 Z" fill="#8a8a8a"/>
<rect x="133.5" y="347.59999999999997" width="13.5" height="13.5" rx="2.2" fill="url(#cbg)" stroke="#4d5866" stroke-width="1"/>
<path d="M136.3,352.2 L140.3,356.9 L147.3,345.7" fill="none" stroke="#17283a" stroke-width="2.6" stroke-linejoin="miter"/>
<path d="M161,349.2 C164,347.7 167,350.2 169,349.5 C172,348.09999999999997 175.5,348.7 175.5,352.7 C175.5,356.7 173,356.7 170.5,355.2 C168,354.2 165,355.7 162.5,358.7 C160,356.7 159.5,352.7 161,349.2 Z" fill="#efefef" stroke="#999" stroke-width=".9"/>
<text x="182.3" y="358.0" font-family="Liberation Sans" font-weight="bold" font-size="13" fill="#000">vw_hokkaido_buffer_select</text>
<rect x="151.5" y="366.2" width="14.5" height="14.5" fill="#a77dc1" stroke="#5e3d74" stroke-width="1" stroke-opacity=".6"/>
<path d="M112,388.9 H121 L116.5,396.59999999999997 Z" fill="#8a8a8a"/>
<rect x="133.5" y="385.59999999999997" width="13.5" height="13.5" rx="2.2" fill="url(#cbg)" stroke="#4d5866" stroke-width="1"/>
<path d="M136.3,390.2 L140.3,394.9 L147.3,383.7" fill="none" stroke="#17283a" stroke-width="2.6" stroke-linejoin="miter"/>
<path d="M161,387.2 C164,385.7 167,388.2 169,387.5 C172,386.09999999999997 175.5,386.7 175.5,390.7 C175.5,394.7 173,394.7 170.5,393.2 C168,392.2 165,393.7 162.5,396.7 C160,394.7 159.5,390.7 161,387.2 Z" fill="#efefef" stroke="#999" stroke-width=".9"/>
<text x="182.3" y="396.0" font-family="Liberation Sans" font-weight="bold" font-size="13" fill="#000">vw_regions_adjoining_hokkaido</text>
<rect x="151.5" y="404.2" width="14.5" height="14.5" fill="#f0203e" stroke="#8a0a14" stroke-width="1" stroke-opacity=".6"/>
<path d="M112,426.9 H121 L116.5,434.59999999999997 Z" fill="#8a8a8a"/>
<rect x="133.5" y="423.59999999999997" width="13.5" height="13.5" rx="2.2" fill="url(#cbg)" stroke="#4d5866" stroke-width="1"/>
<path d="M136.3,428.2 L140.3,432.9 L147.3,421.7" fill="none" stroke="#17283a" stroke-width="2.6" stroke-linejoin="miter"/>
<path d="M161,425.2 C164,423.7 167,426.2 169,425.5 C172,424.09999999999997 175.5,424.7 175.5,428.7 C175.5,432.7 173,432.7 170.5,431.2 C168,430.2 165,431.7 162.5,434.7 C160,432.7 159.5,428.7 161,425.2 Z" fill="#efefef" stroke="#999" stroke-width=".9"/>
<text x="182.3" y="434.0" font-family="Liberation Sans" font-weight="bold" font-size="13" fill="#000">region</text>
<rect x="151.5" y="442.2" width="14.5" height="14.5" fill="#f0b1cf" stroke="#a06080" stroke-width="1" stroke-opacity=".6"/>
<path d="M112,464.9 H121 L116.5,472.59999999999997 Z" fill="#8a8a8a"/>
<rect x="133.5" y="461.59999999999997" width="13.5" height="13.5" rx="2.2" fill="url(#cbg)" stroke="#4d5866" stroke-width="1"/>
<path d="M136.3,466.2 L140.3,470.9 L147.3,459.7" fill="none" stroke="#17283a" stroke-width="2.6" stroke-linejoin="miter"/>
<path d="M161,463.7 L166,472.7 L170,463.7 L175,460.7" fill="none" stroke="#999" stroke-width=".9"/><circle cx="166" cy="472.7" r="1.3" fill="#fff" stroke="#999" stroke-width=".6"/><circle cx="175" cy="460.7" r="1.3" fill="#fff" stroke="#999" stroke-width=".6"/>
<text x="182.3" y="472.0" font-family="Liberation Sans" font-weight="bold" font-size="13" fill="#000">road</text>
<path d="M151,487.0 H166" stroke="#9a50e0" stroke-width="1.3"/>
<path d="M106,1156 V1161 Q106,1165.5 110.5,1165.5 H393.5 Q398,1165.5 398,1161 V1156" fill="#e6e6e6" stroke="#cfcfcf" stroke-width="1"/>
<path d="M187.5,1156.5 H247.5 V1176.5 H191.5 Q187.5,1176.5 187.5,1172.5 Z" fill="url(#tabdark)" stroke="#7a7a7a"/>
<path d="M247.5,1156.5 H314 Q318,1156.5 318,1160.5 V1172.5 Q318,1176.5 314,1176.5 H247.5 Z" fill="#fff" stroke="#9a9a9a"/>
<text x="217.5" y="1170.5" text-anchor="middle" font-family="Liberation Sans" font-size="13" fill="#fff">Layers</text>
<text x="283" y="1170.5" text-anchor="middle" font-family="Liberation Sans" font-size="13" fill="#111">Browser</text>
<rect x="1174.5" y="1183.5" width="19" height="19" fill="#f4f4f4" stroke="#8a8a8a"/><circle cx="1183" cy="1191" r="4.5" fill="none" stroke="#333" stroke-width="1.5"/><path d="M1180,1188 L1189,1198 M1186,1186 L1182,1197" stroke="#333" stroke-width="1.2"/><circle cx="1186.5" cy="1196" r="2.5" fill="none" stroke="#555" stroke-width="1.2"/>
<text x="1203" y="1196" font-family="Liberation Sans" font-size="13" fill="#111">Coordinate:</text>
<rect x="1280.5" y="1183.5" width="299" height="19" fill="#fff" stroke="#8f8f8f"/>
<text x="1429" y="1197" text-anchor="middle" font-family="Liberation Sans" font-size="13" fill="#111">1619484,6940048</text>
<text x="1589.5" y="1196" font-family="Liberation Sans" font-size="13" fill="#111">Scale</text>
<rect x="1635.5" y="1187.5" width="93" height="14" rx="2" fill="#fff" stroke="#a0a0a0"/><path d="M1714.5,1188 V1201" stroke="#ccc"/><path d="M1718.5,1193.5 H1724.5 L1721.5,1197.5 Z" fill="#555"/>
<text x="1636.5" y="1199" font-family="Liberation Sans" font-size="13" fill="#111">1:33565585</text>
<rect x="1735.5" y="1183.5" width="19" height="19" fill="#f2f2f2" stroke="#8a8a8a"/><path d="M1740,1200 C1745,1195 1748,1191 1751,1186 L1752,1189 C1749,1194 1746,1198 1740,1200 Z" fill="#666"/><circle cx="1742.5" cy="1189.5" r="3.3" fill="none" stroke="#e02020" stroke-width="1.4"/><path d="M1740.2,1191.8 L1744.8,1187.2" stroke="#e02020" stroke-width="1.4"/>
<rect x="1761.5" y="1187" width="14" height="13.5" rx="2.2" fill="url(#cbg)" stroke="#4d5866"/><path d="M1764,1193 L1768,1197.5 L1775,1186" fill="none" stroke="#17283a" stroke-width="2.6"/>
<text x="1779.5" y="1196" font-family="Liberation Sans" font-size="13" fill="#111">Render</text>
<text x="1827.5" y="1196" font-family="Liberation Sans" font-size="13" fill="#444">EPSG:4326</text>
<rect x="1905.5" y="1184.5" width="19" height="17" fill="#f6f6f6" stroke="#8a8a8a"/><circle cx="1915" cy="1193" r="6.5" fill="none" stroke="#888" stroke-width="1.3"/><rect x="1912" y="1190" width="6" height="6" fill="none" stroke="#888"/><path d="M1909,1193 H1921 M1915,1187 V1199" stroke="#aaa" stroke-width=".6"/>
<rect x="1931.5" y="1183.5" width="19" height="19" fill="#f4f4f4" stroke="#8a8a8a"/><path d="M1941,1187 L1947,1198.5 Q1947.5,1199.5 1946,1199.5 H1936 Q1934.5,1199.5 1935,1198.5 Z" fill="#f6f0b0" stroke="#777" stroke-width=".8"/><path d="M1941,1190.5 V1195" stroke="#222" stroke-width="1.6"/><rect x="1940.2" y="1196.3" width="1.6" height="1.6" fill="#222"/>
<path d="M1965,1208 L1976.5,1196.5 M1969,1208 L1976.5,1200.5 M1973,1208 L1976.5,1204.5" stroke="#8a8a8a" stroke-width="0.9"/>
<defs><linearGradient id="cbg" x1="0" y1="0" x2="0" y2="1"><stop offset="0" stop-color="#f7f9fb"/><stop offset=".5" stop-color="#dfe5eb"/><stop offset="1" stop-color="#b3bfcb"/></linearGradient><linearGradient id="tabdark" x1="0" y1="0" x2="0" y2="1"><stop offset="0" stop-color="#9a9a9a"/><stop offset="1" stop-color="#7e7e7e"/></linearGradient></defs>
</svg>
</body></html>
